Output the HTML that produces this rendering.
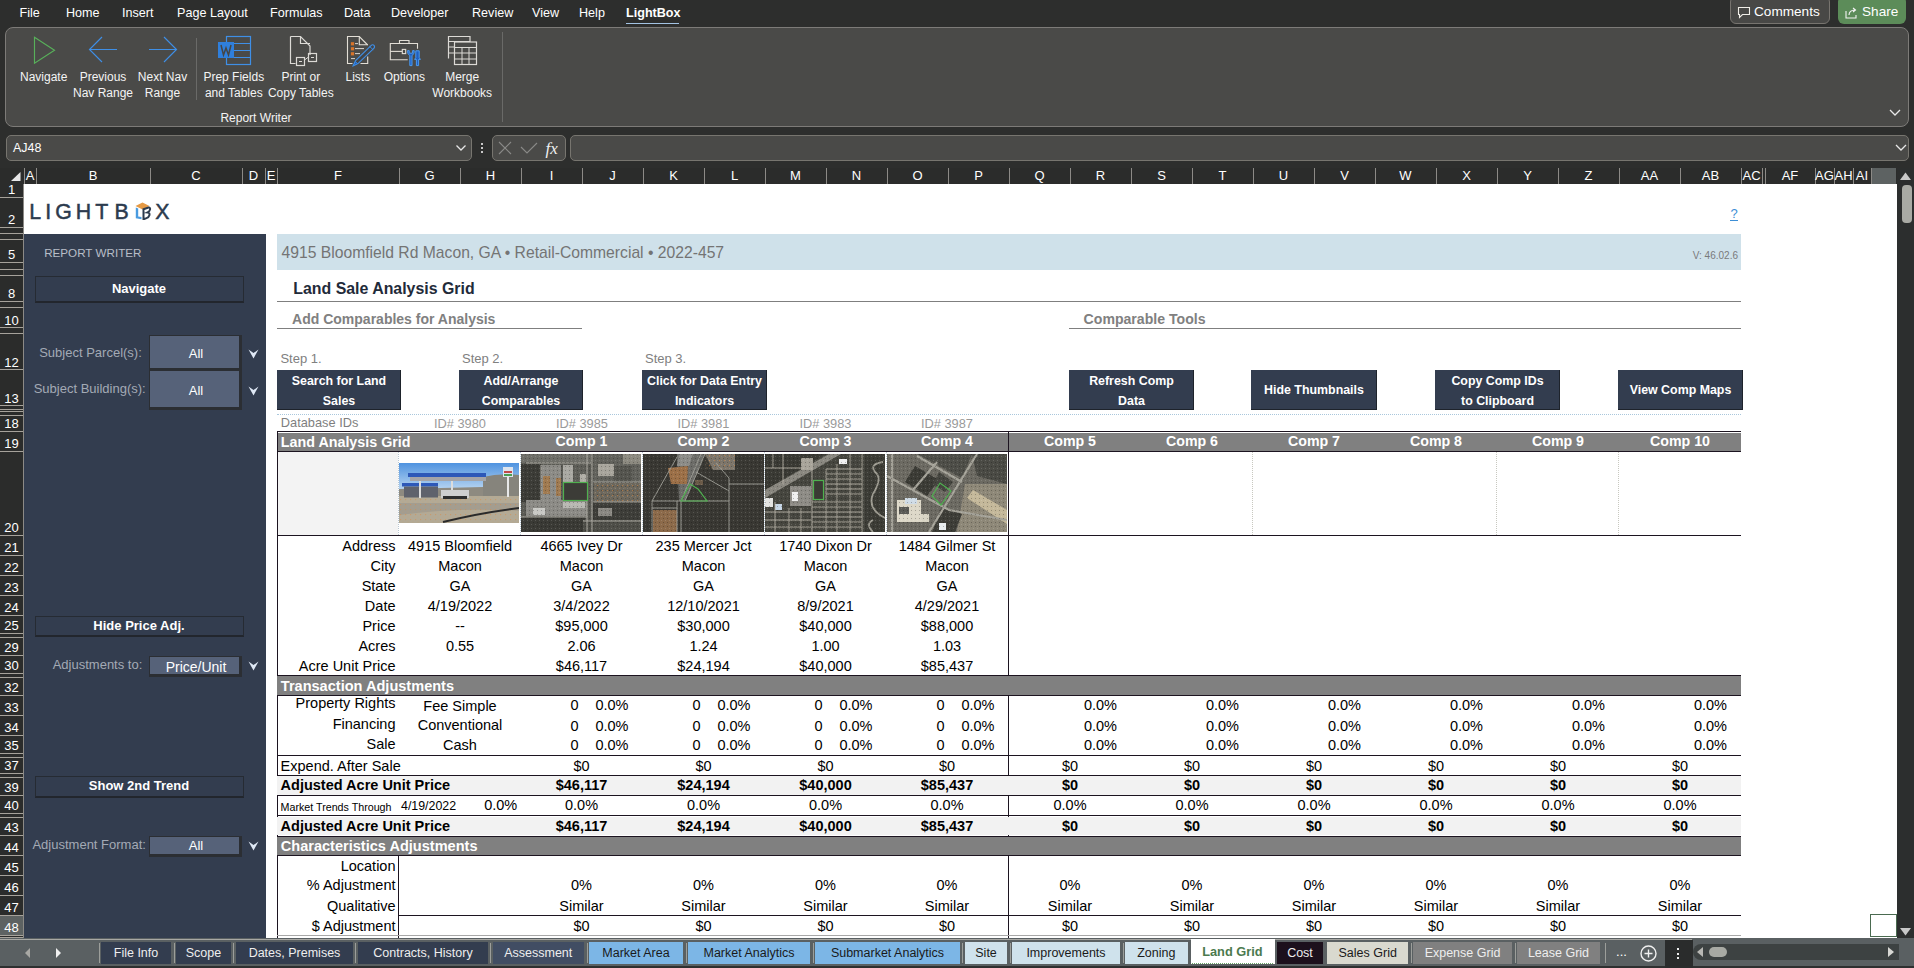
<!DOCTYPE html>
<html><head><meta charset="utf-8"><title>LightBox Land Grid</title>
<style>
html,body{margin:0;padding:0;}
body{width:1914px;height:968px;overflow:hidden;position:relative;background:#2d2e2d;font-family:'Liberation Sans', sans-serif;}
.a{position:absolute;box-sizing:border-box;}
.t{position:absolute;white-space:pre;}
</style></head><body>
<div class="t" style="left:19.5px;top:5.50px;font-size:12.6px;line-height:14.49px;color:#ffffff;font-weight:normal;">File</div>
<div class="t" style="left:66px;top:5.50px;font-size:12.6px;line-height:14.49px;color:#ffffff;font-weight:normal;">Home</div>
<div class="t" style="left:122px;top:5.50px;font-size:12.6px;line-height:14.49px;color:#ffffff;font-weight:normal;">Insert</div>
<div class="t" style="left:177px;top:5.50px;font-size:12.6px;line-height:14.49px;color:#ffffff;font-weight:normal;">Page Layout</div>
<div class="t" style="left:270px;top:5.50px;font-size:12.6px;line-height:14.49px;color:#ffffff;font-weight:normal;">Formulas</div>
<div class="t" style="left:344px;top:5.50px;font-size:12.6px;line-height:14.49px;color:#ffffff;font-weight:normal;">Data</div>
<div class="t" style="left:391px;top:5.50px;font-size:12.6px;line-height:14.49px;color:#ffffff;font-weight:normal;">Developer</div>
<div class="t" style="left:472px;top:5.50px;font-size:12.6px;line-height:14.49px;color:#ffffff;font-weight:normal;">Review</div>
<div class="t" style="left:532px;top:5.50px;font-size:12.6px;line-height:14.49px;color:#ffffff;font-weight:normal;">View</div>
<div class="t" style="left:579px;top:5.50px;font-size:12.6px;line-height:14.49px;color:#ffffff;font-weight:normal;">Help</div>
<div class="t" style="left:626px;top:5.50px;font-size:12.6px;line-height:14.49px;color:#ffffff;font-weight:bold;">LightBox</div>
<div class="a" style="left:626px;top:22.5px;width:53px;height:1.5px;background:#a3c3e3;"></div>
<div class="a" style="left:1730px;top:-4px;width:100px;height:28px;border:1px solid #77746f;border-radius:6px;background:#484846;"></div>
<svg class="a" style="left:1737px;top:6px" width="14" height="13" viewBox="0 0 14 13"><path d="M1.5 1.5h11v7h-7l-3 3v-3h-1z" fill="none" stroke="#f0eee8" stroke-width="1.1"/></svg>
<div class="t" style="left:1754px;top:4.49px;font-size:13.6px;line-height:15.64px;color:#ffffff;font-weight:normal;">Comments</div>
<div class="a" style="left:1838px;top:-4px;width:68px;height:28px;border-radius:6px;background:#5c8c59;"></div>
<svg class="a" style="left:1845px;top:6px" width="13" height="13" viewBox="0 0 13 13"><path d="M1 5v7h10V9" fill="none" stroke="#f4f4f4" stroke-width="1.1"/><path d="M4 9c0-3 2-5 6-5M8 2l2.5 2L8 6" fill="none" stroke="#f4f4f4" stroke-width="1.1"/></svg>
<div class="t" style="left:1862px;top:4.49px;font-size:13.6px;line-height:15.64px;color:#ffffff;font-weight:normal;">Share</div>
<div class="a" style="left:5px;top:27px;width:1904px;height:100px;border:1px solid #7d7b78;border-radius:8px;background:#4a4a48;"></div>
<div class="a" style="left:196px;top:38px;width:1px;height:62px;background:#6a6a68;"></div>
<div class="a" style="left:502px;top:32px;width:1px;height:90px;background:#6a6a68;"></div>
<svg class="a" style="left:1888px;top:108px" width="14" height="9" viewBox="0 0 14 9"><path d="M2 2l5 5 5-5" fill="none" stroke="#e8e8e8" stroke-width="1.3"/></svg>
<svg class="a" style="left:33px;top:36px" width="24" height="29" viewBox="0 0 24 29"><path d="M1.5 1.2L21.5 14.2L1.5 27.2Z" fill="none" stroke="#58b05a" stroke-width="1.15"/></svg>
<svg class="a" style="left:88px;top:36px" width="30" height="28" viewBox="0 0 30 28"><path d="M14 1L1.5 13.5L14 26M1.5 13.5H29" fill="none" stroke="#3f8fe6" stroke-width="1.15"/></svg>
<svg class="a" style="left:148px;top:36px" width="30" height="28" viewBox="0 0 30 28"><path d="M16 1L28.5 13.5L16 26M28.5 13.5H1" fill="none" stroke="#3f8fe6" stroke-width="1.15"/></svg>
<svg class="a" style="left:217px;top:35px" width="35" height="31" viewBox="0 0 35 31"><rect x="9.5" y="1.5" width="24" height="28" fill="none" stroke="#3f8fe6" stroke-width="1.2"/><path d="M17 8.5H33M17 15.5H33M17 22.5H33" stroke="#3f8fe6" stroke-width="1.2"/><rect x="1" y="7" width="16" height="16" fill="#2f7fdc"/><path d="M4 10l2.5 10 2.5-7 2.5 7 2.5-10" fill="none" stroke="#454545" stroke-width="1.5"/></svg>
<svg class="a" style="left:289px;top:35px" width="31" height="32" viewBox="0 0 31 32"><path d="M1.5 1.5H11.5L21 11V20M6.5 28.5H1.5V1.5" fill="none" stroke="#dcdad6" stroke-width="1.2"/><path d="M11.5 1.5V8.5H21" fill="none" stroke="#dcdad6" stroke-width="1.2"/><rect x="7.5" y="22.5" width="8" height="8" fill="none" stroke="#dcdad6" stroke-width="1.2"/><rect x="19.5" y="18.5" width="8" height="8" fill="none" stroke="#dcdad6" stroke-width="1.2"/><path d="M15.5 25L19.5 22M10 26.5h3M22 22.5h3" stroke="#dcdad6" stroke-width="1"/></svg>
<svg class="a" style="left:340px;top:32px" width="90" height="38" viewBox="0 0 90 38"><path d="M27.7 24.5V31.5H20.5M12.5 31.5H7.5V4.5H19.3L27.7 13" fill="none" stroke="#e2ded6" stroke-width="1.1"/><path d="M19.3 4.5V12.7H27.7" fill="none" stroke="#e2ded6" stroke-width="1.1"/><rect x="10.9" y="10.2" width="3.2" height="3.2" fill="#d8742a"/><rect x="10.9" y="15.2" width="3.2" height="3.2" fill="#d8742a"/><rect x="10.9" y="20.2" width="3.2" height="3.2" fill="#d8742a"/><path d="M15 11.6h3M15 16.6h9M15 21.6h5M11 26.6h4" stroke="#d8d6d0" stroke-width="1"/><path d="M13.2 33.8L15.6 28.6L31 13.6Q32.8 12 34 13.4Q35.3 14.9 33.6 16.6L18.2 31.4Z" fill="#434447" stroke="#3f8fe6" stroke-width="1.1"/><path d="M13.2 33.8L15.5 29.6L17.6 31.6Z" fill="#1f5fc0" stroke="#3f8fe6" stroke-width="0.8"/><path d="M29.5 14.3L33.2 17.8" stroke="#3f8fe6" stroke-width="0.9"/><path d="M59.5 11.3V8.5H69V11.3" fill="none" stroke="#e2ded6" stroke-width="1.1"/><path d="M77.5 16.8V11.5H50.3V27.7H67.7" fill="none" stroke="#e2ded6" stroke-width="1.1"/><path d="M50.3 19.4H62" stroke="#e2ded6" stroke-width="1.1"/><rect x="62.3" y="17.4" width="3.4" height="4.2" fill="none" stroke="#e2ded6" stroke-width="1.1"/><path d="M67.6 18.6Q67 22.2 69.8 23.4V33.6H72V23.4Q74.8 22.2 74.2 18.6L72.6 18.6V21.2H69.2V18.6Z" fill="#1f5fc0" stroke="#4a9af0" stroke-width="1"/><path d="M75.8 18.8H79.2V25.6L80.4 27.4H78.6V33.6H76.4V27.4H74.6L75.8 25.6Z" fill="#1f5fc0" stroke="#4a9af0" stroke-width="1"/></svg>
<svg class="a" style="left:447px;top:35px" width="31" height="31" viewBox="0 0 31 31"><path d="M1.5 23.5V1.5H23V7" fill="none" stroke="#dcdad6" stroke-width="1.2"/><path d="M1.5 6.5H23M1.5 12H7M1.5 18H7" stroke="#dcdad6" stroke-width="1"/><rect x="7.5" y="7" width="22" height="22.5" fill="none" stroke="#dcdad6" stroke-width="1.2"/><path d="M7.5 12.5H29.5M7.5 18H29.5M7.5 24H29.5M15 12.5V29.5M22 12.5V29.5" stroke="#dcdad6" stroke-width="1"/></svg>
<div class="t" style="left:3.700000000000003px;width:80px;text-align:center;top:71.24px;font-size:12px;line-height:13.80px;color:#f4f4f4;font-weight:normal;">Navigate</div>
<div class="t" style="left:63.0px;width:80px;text-align:center;top:71.24px;font-size:12px;line-height:13.80px;color:#f4f4f4;font-weight:normal;">Previous</div>
<div class="t" style="left:63.0px;width:80px;text-align:center;top:87.04px;font-size:12px;line-height:13.80px;color:#f4f4f4;font-weight:normal;">Nav Range</div>
<div class="t" style="left:122.5px;width:80px;text-align:center;top:71.24px;font-size:12px;line-height:13.80px;color:#f4f4f4;font-weight:normal;">Next Nav</div>
<div class="t" style="left:122.5px;width:80px;text-align:center;top:87.04px;font-size:12px;line-height:13.80px;color:#f4f4f4;font-weight:normal;">Range</div>
<div class="t" style="left:193.8px;width:80px;text-align:center;top:71.24px;font-size:12px;line-height:13.80px;color:#f4f4f4;font-weight:normal;">Prep Fields</div>
<div class="t" style="left:193.8px;width:80px;text-align:center;top:87.04px;font-size:12px;line-height:13.80px;color:#f4f4f4;font-weight:normal;">and Tables</div>
<div class="t" style="left:260.8px;width:80px;text-align:center;top:71.24px;font-size:12px;line-height:13.80px;color:#f4f4f4;font-weight:normal;">Print or</div>
<div class="t" style="left:260.8px;width:80px;text-align:center;top:87.04px;font-size:12px;line-height:13.80px;color:#f4f4f4;font-weight:normal;">Copy Tables</div>
<div class="t" style="left:327.8px;width:60px;text-align:center;top:71.24px;font-size:12px;line-height:13.80px;color:#f4f4f4;font-weight:normal;">Lists</div>
<div class="t" style="left:374.4px;width:60px;text-align:center;top:71.24px;font-size:12px;line-height:13.80px;color:#f4f4f4;font-weight:normal;">Options</div>
<div class="t" style="left:422.2px;width:80px;text-align:center;top:71.24px;font-size:12px;line-height:13.80px;color:#f4f4f4;font-weight:normal;">Merge</div>
<div class="t" style="left:422.2px;width:80px;text-align:center;top:87.04px;font-size:12px;line-height:13.80px;color:#f4f4f4;font-weight:normal;">Workbooks</div>
<div class="t" style="left:196.0px;width:120px;text-align:center;top:111.54px;font-size:12px;line-height:13.80px;color:#f4f4f4;font-weight:normal;">Report Writer</div>
<div class="a" style="left:6px;top:135px;width:466px;height:26px;border:1px solid #77756f;border-radius:5px;background:#4a4a48;"></div>
<div class="t" style="left:13px;top:141.49px;font-size:12.5px;line-height:14.37px;color:#ffffff;font-weight:normal;">AJ48</div>
<svg class="a" style="left:455px;top:144px" width="12" height="8" viewBox="0 0 12 8"><path d="M1.5 1.5l4.5 4.5 4.5-4.5" fill="none" stroke="#e6e6e6" stroke-width="1.3"/></svg>
<div class="a" style="left:481px;top:143px;width:2px;height:2px;background:#c8c8c8;"></div>
<div class="a" style="left:481px;top:147px;width:2px;height:2px;background:#c8c8c8;"></div>
<div class="a" style="left:481px;top:151px;width:2px;height:2px;background:#c8c8c8;"></div>
<div class="a" style="left:492px;top:135px;width:74px;height:26px;border:1px solid #77756f;border-radius:5px;background:#4a4a48;"></div>
<svg class="a" style="left:497px;top:141px" width="66" height="14" viewBox="0 0 66 14"><path d="M2 1l12 12M14 1L2 13" stroke="#8a8a88" stroke-width="1.1"/><path d="M24 6l6 6 10-10" fill="none" stroke="#8a8a88" stroke-width="1.1"/></svg>
<div class="t" style="left:545.5px;top:139.12px;font-size:17px;line-height:19.55px;color:#f0f0f0;font-weight:normal;font-style:italic;font-family:'Liberation Serif',serif;">fx</div>
<div class="a" style="left:570px;top:135px;width:1339px;height:26px;border:1px solid #77756f;border-radius:5px;background:#4a4a48;"></div>
<svg class="a" style="left:1894px;top:143px" width="14" height="9" viewBox="0 0 14 9"><path d="M2 2l5 5 5-5" fill="none" stroke="#e8e8e8" stroke-width="1.3"/></svg>
<div class="a" style="left:24px;top:184px;width:1873px;height:754px;background:#ffffff;"></div>
<div class="a" style="left:0px;top:168px;width:1897px;height:16px;background:#2b2c2b;"></div>
<svg class="a" style="left:11px;top:172px" width="10" height="9" viewBox="0 0 10 9"><path d="M9.5 0V9H0Z" fill="#e8e8e8"/></svg>
<div class="a" style="left:24px;top:168px;width:1px;height:16px;background:#8c8a86;"></div>
<div class="t" style="left:19.0px;width:22px;text-align:center;top:169.24px;font-size:13px;line-height:14.95px;color:#ffffff;font-weight:normal;">A</div>
<div class="a" style="left:36px;top:168px;width:1px;height:16px;background:#8c8a86;"></div>
<div class="t" style="left:31.0px;width:124px;text-align:center;top:169.24px;font-size:13px;line-height:14.95px;color:#ffffff;font-weight:normal;">B</div>
<div class="a" style="left:150px;top:168px;width:1px;height:16px;background:#8c8a86;"></div>
<div class="t" style="left:145.0px;width:102px;text-align:center;top:169.24px;font-size:13px;line-height:14.95px;color:#ffffff;font-weight:normal;">C</div>
<div class="a" style="left:242px;top:168px;width:1px;height:16px;background:#8c8a86;"></div>
<div class="t" style="left:237.0px;width:33px;text-align:center;top:169.24px;font-size:13px;line-height:14.95px;color:#ffffff;font-weight:normal;">D</div>
<div class="a" style="left:265px;top:168px;width:1px;height:16px;background:#8c8a86;"></div>
<div class="t" style="left:260.0px;width:22px;text-align:center;top:169.24px;font-size:13px;line-height:14.95px;color:#ffffff;font-weight:normal;">E</div>
<div class="a" style="left:277px;top:168px;width:1px;height:16px;background:#8c8a86;"></div>
<div class="t" style="left:272.0px;width:132px;text-align:center;top:169.24px;font-size:13px;line-height:14.95px;color:#ffffff;font-weight:normal;">F</div>
<div class="a" style="left:399px;top:168px;width:1px;height:16px;background:#8c8a86;"></div>
<div class="t" style="left:394.0px;width:71px;text-align:center;top:169.24px;font-size:13px;line-height:14.95px;color:#ffffff;font-weight:normal;">G</div>
<div class="a" style="left:460px;top:168px;width:1px;height:16px;background:#8c8a86;"></div>
<div class="t" style="left:455.0px;width:71px;text-align:center;top:169.24px;font-size:13px;line-height:14.95px;color:#ffffff;font-weight:normal;">H</div>
<div class="a" style="left:521px;top:168px;width:1px;height:16px;background:#8c8a86;"></div>
<div class="t" style="left:516.0px;width:71px;text-align:center;top:169.24px;font-size:13px;line-height:14.95px;color:#ffffff;font-weight:normal;">I</div>
<div class="a" style="left:582px;top:168px;width:1px;height:16px;background:#8c8a86;"></div>
<div class="t" style="left:577.0px;width:71px;text-align:center;top:169.24px;font-size:13px;line-height:14.95px;color:#ffffff;font-weight:normal;">J</div>
<div class="a" style="left:643px;top:168px;width:1px;height:16px;background:#8c8a86;"></div>
<div class="t" style="left:638.0px;width:71px;text-align:center;top:169.24px;font-size:13px;line-height:14.95px;color:#ffffff;font-weight:normal;">K</div>
<div class="a" style="left:704px;top:168px;width:1px;height:16px;background:#8c8a86;"></div>
<div class="t" style="left:699.0px;width:71px;text-align:center;top:169.24px;font-size:13px;line-height:14.95px;color:#ffffff;font-weight:normal;">L</div>
<div class="a" style="left:765px;top:168px;width:1px;height:16px;background:#8c8a86;"></div>
<div class="t" style="left:760.0px;width:71px;text-align:center;top:169.24px;font-size:13px;line-height:14.95px;color:#ffffff;font-weight:normal;">M</div>
<div class="a" style="left:826px;top:168px;width:1px;height:16px;background:#8c8a86;"></div>
<div class="t" style="left:821.0px;width:71px;text-align:center;top:169.24px;font-size:13px;line-height:14.95px;color:#ffffff;font-weight:normal;">N</div>
<div class="a" style="left:887px;top:168px;width:1px;height:16px;background:#8c8a86;"></div>
<div class="t" style="left:882.0px;width:71px;text-align:center;top:169.24px;font-size:13px;line-height:14.95px;color:#ffffff;font-weight:normal;">O</div>
<div class="a" style="left:948px;top:168px;width:1px;height:16px;background:#8c8a86;"></div>
<div class="t" style="left:943.0px;width:71px;text-align:center;top:169.24px;font-size:13px;line-height:14.95px;color:#ffffff;font-weight:normal;">P</div>
<div class="a" style="left:1009px;top:168px;width:1px;height:16px;background:#8c8a86;"></div>
<div class="t" style="left:1004.0px;width:71px;text-align:center;top:169.24px;font-size:13px;line-height:14.95px;color:#ffffff;font-weight:normal;">Q</div>
<div class="a" style="left:1070px;top:168px;width:1px;height:16px;background:#8c8a86;"></div>
<div class="t" style="left:1065.0px;width:71px;text-align:center;top:169.24px;font-size:13px;line-height:14.95px;color:#ffffff;font-weight:normal;">R</div>
<div class="a" style="left:1131px;top:168px;width:1px;height:16px;background:#8c8a86;"></div>
<div class="t" style="left:1126.0px;width:71px;text-align:center;top:169.24px;font-size:13px;line-height:14.95px;color:#ffffff;font-weight:normal;">S</div>
<div class="a" style="left:1192px;top:168px;width:1px;height:16px;background:#8c8a86;"></div>
<div class="t" style="left:1187.0px;width:71px;text-align:center;top:169.24px;font-size:13px;line-height:14.95px;color:#ffffff;font-weight:normal;">T</div>
<div class="a" style="left:1253px;top:168px;width:1px;height:16px;background:#8c8a86;"></div>
<div class="t" style="left:1248.0px;width:71px;text-align:center;top:169.24px;font-size:13px;line-height:14.95px;color:#ffffff;font-weight:normal;">U</div>
<div class="a" style="left:1314px;top:168px;width:1px;height:16px;background:#8c8a86;"></div>
<div class="t" style="left:1309.0px;width:71px;text-align:center;top:169.24px;font-size:13px;line-height:14.95px;color:#ffffff;font-weight:normal;">V</div>
<div class="a" style="left:1375px;top:168px;width:1px;height:16px;background:#8c8a86;"></div>
<div class="t" style="left:1370.0px;width:71px;text-align:center;top:169.24px;font-size:13px;line-height:14.95px;color:#ffffff;font-weight:normal;">W</div>
<div class="a" style="left:1436px;top:168px;width:1px;height:16px;background:#8c8a86;"></div>
<div class="t" style="left:1431.0px;width:71px;text-align:center;top:169.24px;font-size:13px;line-height:14.95px;color:#ffffff;font-weight:normal;">X</div>
<div class="a" style="left:1497px;top:168px;width:1px;height:16px;background:#8c8a86;"></div>
<div class="t" style="left:1492.0px;width:71px;text-align:center;top:169.24px;font-size:13px;line-height:14.95px;color:#ffffff;font-weight:normal;">Y</div>
<div class="a" style="left:1558px;top:168px;width:1px;height:16px;background:#8c8a86;"></div>
<div class="t" style="left:1553.0px;width:71px;text-align:center;top:169.24px;font-size:13px;line-height:14.95px;color:#ffffff;font-weight:normal;">Z</div>
<div class="a" style="left:1619px;top:168px;width:1px;height:16px;background:#8c8a86;"></div>
<div class="t" style="left:1614.0px;width:71px;text-align:center;top:169.24px;font-size:13px;line-height:14.95px;color:#ffffff;font-weight:normal;">AA</div>
<div class="a" style="left:1680px;top:168px;width:1px;height:16px;background:#8c8a86;"></div>
<div class="t" style="left:1675.0px;width:71px;text-align:center;top:169.24px;font-size:13px;line-height:14.95px;color:#ffffff;font-weight:normal;">AB</div>
<div class="a" style="left:1741px;top:168px;width:1px;height:16px;background:#8c8a86;"></div>
<div class="t" style="left:1736.0px;width:31px;text-align:center;top:169.24px;font-size:13px;line-height:14.95px;color:#ffffff;font-weight:normal;">AC</div>
<div class="a" style="left:1762px;top:168px;width:1px;height:16px;background:#8c8a86;"></div>
<div class="a" style="left:1765px;top:168px;width:1px;height:16px;background:#8c8a86;"></div>
<div class="t" style="left:1760.0px;width:60px;text-align:center;top:169.24px;font-size:13px;line-height:14.95px;color:#ffffff;font-weight:normal;">AF</div>
<div class="a" style="left:1815px;top:168px;width:1px;height:16px;background:#8c8a86;"></div>
<div class="t" style="left:1810.0px;width:29px;text-align:center;top:169.24px;font-size:13px;line-height:14.95px;color:#ffffff;font-weight:normal;">AG</div>
<div class="a" style="left:1834px;top:168px;width:1px;height:16px;background:#8c8a86;"></div>
<div class="t" style="left:1829.0px;width:29px;text-align:center;top:169.24px;font-size:13px;line-height:14.95px;color:#ffffff;font-weight:normal;">AH</div>
<div class="a" style="left:1853px;top:168px;width:1px;height:16px;background:#8c8a86;"></div>
<div class="t" style="left:1848.0px;width:28px;text-align:center;top:169.24px;font-size:13px;line-height:14.95px;color:#ffffff;font-weight:normal;">AI</div>
<div class="a" style="left:1871px;top:168px;width:1px;height:16px;background:#8c8a86;"></div>
<div class="a" style="left:1872px;top:168px;width:24px;height:16px;background:#5d6262;"></div>
<div class="a" style="left:0px;top:184px;width:23px;height:754px;background:#2b2c2b;"></div>
<div class="a" style="left:0px;top:915.5px;width:23px;height:20px;background:#5d6262;"></div>
<div class="a" style="left:23px;top:184px;width:1px;height:754px;background:#8c8a86;"></div>
<div class="a" style="left:0px;top:197px;width:23px;height:1px;background:#a6a29b;"></div>
<div class="t" style="left:-0.5px;width:24px;text-align:center;top:182.54px;font-size:13px;line-height:14.95px;color:#ffffff;font-weight:normal;">1</div>
<div class="a" style="left:0px;top:227px;width:23px;height:1px;background:#a6a29b;"></div>
<div class="t" style="left:-0.5px;width:24px;text-align:center;top:213.04px;font-size:13px;line-height:14.95px;color:#ffffff;font-weight:normal;">2</div>
<div class="a" style="left:0px;top:233px;width:23px;height:1px;background:#a6a29b;"></div>
<div class="a" style="left:0px;top:239px;width:23px;height:1px;background:#a6a29b;"></div>
<div class="a" style="left:0px;top:262px;width:23px;height:1px;background:#a6a29b;"></div>
<div class="t" style="left:-0.5px;width:24px;text-align:center;top:248.04px;font-size:13px;line-height:14.95px;color:#ffffff;font-weight:normal;">5</div>
<div class="a" style="left:0px;top:269px;width:23px;height:1px;background:#a6a29b;"></div>
<div class="a" style="left:0px;top:275px;width:23px;height:1px;background:#a6a29b;"></div>
<div class="a" style="left:0px;top:301px;width:23px;height:1px;background:#a6a29b;"></div>
<div class="t" style="left:-0.5px;width:24px;text-align:center;top:286.54px;font-size:13px;line-height:14.95px;color:#ffffff;font-weight:normal;">8</div>
<div class="a" style="left:0px;top:307px;width:23px;height:1px;background:#a6a29b;"></div>
<div class="a" style="left:0px;top:327px;width:23px;height:1px;background:#a6a29b;"></div>
<div class="t" style="left:-0.5px;width:24px;text-align:center;top:313.54px;font-size:13px;line-height:14.95px;color:#ffffff;font-weight:normal;">10</div>
<div class="a" style="left:0px;top:333px;width:23px;height:1px;background:#a6a29b;"></div>
<div class="a" style="left:0px;top:369px;width:23px;height:1px;background:#a6a29b;"></div>
<div class="t" style="left:-0.5px;width:24px;text-align:center;top:355.54px;font-size:13px;line-height:14.95px;color:#ffffff;font-weight:normal;">12</div>
<div class="a" style="left:0px;top:405px;width:23px;height:1px;background:#a6a29b;"></div>
<div class="t" style="left:-0.5px;width:24px;text-align:center;top:391.54px;font-size:13px;line-height:14.95px;color:#ffffff;font-weight:normal;">13</div>
<div class="a" style="left:0px;top:409px;width:23px;height:1px;background:#a6a29b;"></div>
<div class="a" style="left:0px;top:411px;width:23px;height:1px;background:#a6a29b;"></div>
<div class="a" style="left:0px;top:415px;width:23px;height:1px;background:#a6a29b;"></div>
<div class="a" style="left:0px;top:431px;width:23px;height:1px;background:#a6a29b;"></div>
<div class="t" style="left:-0.5px;width:24px;text-align:center;top:416.54px;font-size:13px;line-height:14.95px;color:#ffffff;font-weight:normal;">18</div>
<div class="a" style="left:0px;top:451px;width:23px;height:1px;background:#a6a29b;"></div>
<div class="t" style="left:-0.5px;width:24px;text-align:center;top:436.54px;font-size:13px;line-height:14.95px;color:#ffffff;font-weight:normal;">19</div>
<div class="a" style="left:0px;top:535px;width:23px;height:1px;background:#a6a29b;"></div>
<div class="t" style="left:-0.5px;width:24px;text-align:center;top:520.53px;font-size:13px;line-height:14.95px;color:#ffffff;font-weight:normal;">20</div>
<div class="a" style="left:0px;top:555px;width:23px;height:1px;background:#a6a29b;"></div>
<div class="t" style="left:-0.5px;width:24px;text-align:center;top:540.53px;font-size:13px;line-height:14.95px;color:#ffffff;font-weight:normal;">21</div>
<div class="a" style="left:0px;top:575px;width:23px;height:1px;background:#a6a29b;"></div>
<div class="t" style="left:-0.5px;width:24px;text-align:center;top:560.53px;font-size:13px;line-height:14.95px;color:#ffffff;font-weight:normal;">22</div>
<div class="a" style="left:0px;top:595px;width:23px;height:1px;background:#a6a29b;"></div>
<div class="t" style="left:-0.5px;width:24px;text-align:center;top:580.53px;font-size:13px;line-height:14.95px;color:#ffffff;font-weight:normal;">23</div>
<div class="a" style="left:0px;top:615px;width:23px;height:1px;background:#a6a29b;"></div>
<div class="t" style="left:-0.5px;width:24px;text-align:center;top:600.53px;font-size:13px;line-height:14.95px;color:#ffffff;font-weight:normal;">24</div>
<div class="a" style="left:0px;top:633px;width:23px;height:1px;background:#a6a29b;"></div>
<div class="t" style="left:-0.5px;width:24px;text-align:center;top:618.53px;font-size:13px;line-height:14.95px;color:#ffffff;font-weight:normal;">25</div>
<div class="a" style="left:0px;top:637px;width:23px;height:1px;background:#a6a29b;"></div>
<div class="a" style="left:0px;top:655px;width:23px;height:1px;background:#a6a29b;"></div>
<div class="t" style="left:-0.5px;width:24px;text-align:center;top:640.53px;font-size:13px;line-height:14.95px;color:#ffffff;font-weight:normal;">29</div>
<div class="a" style="left:0px;top:673px;width:23px;height:1px;background:#a6a29b;"></div>
<div class="t" style="left:-0.5px;width:24px;text-align:center;top:658.53px;font-size:13px;line-height:14.95px;color:#ffffff;font-weight:normal;">30</div>
<div class="a" style="left:0px;top:677px;width:23px;height:1px;background:#a6a29b;"></div>
<div class="a" style="left:0px;top:695px;width:23px;height:1px;background:#a6a29b;"></div>
<div class="t" style="left:-0.5px;width:24px;text-align:center;top:680.53px;font-size:13px;line-height:14.95px;color:#ffffff;font-weight:normal;">32</div>
<div class="a" style="left:0px;top:715px;width:23px;height:1px;background:#a6a29b;"></div>
<div class="t" style="left:-0.5px;width:24px;text-align:center;top:700.53px;font-size:13px;line-height:14.95px;color:#ffffff;font-weight:normal;">33</div>
<div class="a" style="left:0px;top:735px;width:23px;height:1px;background:#a6a29b;"></div>
<div class="t" style="left:-0.5px;width:24px;text-align:center;top:720.53px;font-size:13px;line-height:14.95px;color:#ffffff;font-weight:normal;">34</div>
<div class="a" style="left:0px;top:753px;width:23px;height:1px;background:#a6a29b;"></div>
<div class="t" style="left:-0.5px;width:24px;text-align:center;top:738.53px;font-size:13px;line-height:14.95px;color:#ffffff;font-weight:normal;">35</div>
<div class="a" style="left:0px;top:757px;width:23px;height:1px;background:#a6a29b;"></div>
<div class="a" style="left:0px;top:773px;width:23px;height:1px;background:#a6a29b;"></div>
<div class="t" style="left:-0.5px;width:24px;text-align:center;top:758.53px;font-size:13px;line-height:14.95px;color:#ffffff;font-weight:normal;">37</div>
<div class="a" style="left:0px;top:777px;width:23px;height:1px;background:#a6a29b;"></div>
<div class="a" style="left:0px;top:795px;width:23px;height:1px;background:#a6a29b;"></div>
<div class="t" style="left:-0.5px;width:24px;text-align:center;top:780.53px;font-size:13px;line-height:14.95px;color:#ffffff;font-weight:normal;">39</div>
<div class="a" style="left:0px;top:813px;width:23px;height:1px;background:#a6a29b;"></div>
<div class="t" style="left:-0.5px;width:24px;text-align:center;top:798.53px;font-size:13px;line-height:14.95px;color:#ffffff;font-weight:normal;">40</div>
<div class="a" style="left:0px;top:817px;width:23px;height:1px;background:#a6a29b;"></div>
<div class="a" style="left:0px;top:835px;width:23px;height:1px;background:#a6a29b;"></div>
<div class="t" style="left:-0.5px;width:24px;text-align:center;top:820.53px;font-size:13px;line-height:14.95px;color:#ffffff;font-weight:normal;">43</div>
<div class="a" style="left:0px;top:855px;width:23px;height:1px;background:#a6a29b;"></div>
<div class="t" style="left:-0.5px;width:24px;text-align:center;top:840.53px;font-size:13px;line-height:14.95px;color:#ffffff;font-weight:normal;">44</div>
<div class="a" style="left:0px;top:875px;width:23px;height:1px;background:#a6a29b;"></div>
<div class="t" style="left:-0.5px;width:24px;text-align:center;top:860.53px;font-size:13px;line-height:14.95px;color:#ffffff;font-weight:normal;">45</div>
<div class="a" style="left:0px;top:895px;width:23px;height:1px;background:#a6a29b;"></div>
<div class="t" style="left:-0.5px;width:24px;text-align:center;top:880.53px;font-size:13px;line-height:14.95px;color:#ffffff;font-weight:normal;">46</div>
<div class="a" style="left:0px;top:915px;width:23px;height:1px;background:#a6a29b;"></div>
<div class="t" style="left:-0.5px;width:24px;text-align:center;top:900.53px;font-size:13px;line-height:14.95px;color:#ffffff;font-weight:normal;">47</div>
<div class="a" style="left:0px;top:935px;width:23px;height:1px;background:#a6a29b;"></div>
<div class="t" style="left:-0.5px;width:24px;text-align:center;top:920.53px;font-size:13px;line-height:14.95px;color:#ffffff;font-weight:normal;">48</div>
<div class="a" style="left:0px;top:937px;width:23px;height:1px;background:#a6a29b;"></div>
<div class="t" style="left:29.2px;top:199.72px;font-size:21.3px;line-height:24.49px;color:#2c3b4e;font-weight:normal;-webkit-text-stroke:0.5px #2c3b4e;">L</div>
<div class="t" style="left:45.2px;top:199.72px;font-size:21.3px;line-height:24.49px;color:#2c3b4e;font-weight:normal;-webkit-text-stroke:0.5px #2c3b4e;">I</div>
<div class="t" style="left:55.2px;top:199.72px;font-size:21.3px;line-height:24.49px;color:#2c3b4e;font-weight:normal;-webkit-text-stroke:0.5px #2c3b4e;">G</div>
<div class="t" style="left:75.8px;top:199.72px;font-size:21.3px;line-height:24.49px;color:#2c3b4e;font-weight:normal;-webkit-text-stroke:0.5px #2c3b4e;">H</div>
<div class="t" style="left:95.2px;top:199.72px;font-size:21.3px;line-height:24.49px;color:#2c3b4e;font-weight:normal;-webkit-text-stroke:0.5px #2c3b4e;">T</div>
<div class="t" style="left:114.5px;top:199.72px;font-size:21.3px;line-height:24.49px;color:#2c3b4e;font-weight:normal;-webkit-text-stroke:0.5px #2c3b4e;">B</div>
<div class="t" style="left:155.3px;top:199.72px;font-size:21.3px;line-height:24.49px;color:#2c3b4e;font-weight:normal;-webkit-text-stroke:0.5px #2c3b4e;">X</div>
<svg class="a" style="left:135px;top:201px" width="17" height="19" viewBox="0 0 17 19"><path d="M0.5 5L7.5 1.5L14.5 5L7.5 8.5Z" fill="#e59a45"/><path d="M0.8 6.5V17.2L6.5 18.2V16L3.2 15.4V7.6Z" fill="#4a9be0"/><path d="M8.5 8.3L13.5 6.6Q15.5 6.4 15 8.6Q14.6 10.4 12.6 11.4Q15 11.6 14.4 14.2Q13.9 16.4 11 17.4L8.5 18.3Z" fill="none" stroke="#2c3b4e" stroke-width="2"/></svg>
<div class="t" style="left:1724.0px;width:20px;text-align:center;top:206.74px;font-size:13px;line-height:14.95px;color:#3d8fd6;font-weight:normal;">?</div>
<div class="a" style="left:1730px;top:220px;width:8px;height:1px;background:#3d8fd6;"></div>
<div class="a" style="left:24px;top:234px;width:242px;height:704px;background:#333d4f;"></div>
<div class="t" style="left:44.2px;top:245.66px;font-size:11.65px;line-height:13.40px;color:#b8bec8;font-weight:normal;">REPORT WRITER</div>
<div class="a" style="left:35px;top:275.5px;width:209px;height:27.0px;border:1px solid #262b33;border-bottom:2px solid #22262d;background:#333d4f;"></div>
<div class="t" style="left:39.0px;width:200px;text-align:center;top:281.54px;font-size:13px;line-height:14.95px;color:#ffffff;font-weight:bold;">Navigate</div>
<div class="a" style="left:35px;top:615.5px;width:209px;height:21.5px;border:1px solid #262b33;border-bottom:2px solid #22262d;background:#333d4f;"></div>
<div class="t" style="left:39.0px;width:200px;text-align:center;top:619.03px;font-size:13px;line-height:14.95px;color:#ffffff;font-weight:bold;">Hide Price Adj.</div>
<div class="a" style="left:35px;top:775.5px;width:209px;height:22.0px;border:1px solid #262b33;border-bottom:2px solid #22262d;background:#333d4f;"></div>
<div class="t" style="left:39.0px;width:200px;text-align:center;top:779.24px;font-size:13px;line-height:14.95px;color:#ffffff;font-weight:bold;">Show 2nd Trend</div>
<div class="t" style="left:11.800000000000011px;width:130px;text-align:right;top:345.54px;font-size:13px;line-height:14.95px;color:#a3aab5;font-weight:normal;">Subject Parcel(s):</div>
<div class="a" style="left:149px;top:334.5px;width:93px;height:36.0px;border:1px solid #2b2e33;border-right:3px solid #2b2e33;border-bottom:3px solid #2b2e33;background:#566279;"></div>
<div class="t" style="left:146.0px;width:100px;text-align:center;top:346.74px;font-size:13px;line-height:14.95px;color:#ffffff;font-weight:normal;">All</div>
<svg class="a" style="left:248px;top:348.5px" width="11" height="10" viewBox="0 0 11 10"><path d="M0.5 0.5L5.5 9.5L10.5 0.5L5.5 4Z" fill="#dfe8f5"/></svg>
<div class="t" style="left:15.699999999999989px;width:130px;text-align:right;top:382.44px;font-size:13px;line-height:14.95px;color:#a3aab5;font-weight:normal;">Subject Building(s):</div>
<div class="a" style="left:149px;top:369.5px;width:93px;height:40.5px;border:1px solid #2b2e33;border-right:3px solid #2b2e33;border-bottom:3px solid #2b2e33;background:#566279;"></div>
<div class="t" style="left:146.0px;width:100px;text-align:center;top:383.74px;font-size:13px;line-height:14.95px;color:#ffffff;font-weight:normal;">All</div>
<svg class="a" style="left:248px;top:385.5px" width="11" height="10" viewBox="0 0 11 10"><path d="M0.5 0.5L5.5 9.5L10.5 0.5L5.5 4Z" fill="#dfe8f5"/></svg>
<div class="t" style="left:12.300000000000011px;width:130px;text-align:right;top:658.13px;font-size:13px;line-height:14.95px;color:#a3aab5;font-weight:normal;">Adjustments to:</div>
<div class="a" style="left:149px;top:655.5px;width:93px;height:21.5px;border:1px solid #2b2e33;border-right:3px solid #2b2e33;border-bottom:3px solid #2b2e33;background:#566279;"></div>
<div class="t" style="left:146.0px;width:100px;text-align:center;top:658.63px;font-size:14px;line-height:16.10px;color:#ffffff;font-weight:normal;">Price/Unit</div>
<svg class="a" style="left:248px;top:661.3px" width="11" height="10" viewBox="0 0 11 10"><path d="M0.5 0.5L5.5 9.5L10.5 0.5L5.5 4Z" fill="#dfe8f5"/></svg>
<div class="t" style="left:15.900000000000006px;width:130px;text-align:right;top:838.44px;font-size:13px;line-height:14.95px;color:#a3aab5;font-weight:normal;">Adjustment Format:</div>
<div class="a" style="left:149px;top:835.5px;width:93px;height:21.0px;border:1px solid #2b2e33;border-right:3px solid #2b2e33;border-bottom:3px solid #2b2e33;background:#566279;"></div>
<div class="t" style="left:146.0px;width:100px;text-align:center;top:839.24px;font-size:13px;line-height:14.95px;color:#ffffff;font-weight:normal;">All</div>
<svg class="a" style="left:248px;top:841px" width="11" height="10" viewBox="0 0 11 10"><path d="M0.5 0.5L5.5 9.5L10.5 0.5L5.5 4Z" fill="#dfe8f5"/></svg>
<div class="a" style="left:277px;top:234px;width:1464px;height:36px;background:#cfe1ea;"></div>
<div class="t" style="left:281.5px;top:244.19px;font-size:15.7px;line-height:18.05px;color:#747474;font-weight:normal;">4915 Bloomfield Rd Macon, GA • Retail-Commercial • 2022-457</div>
<div class="t" style="left:1658px;width:80px;text-align:right;top:249.95px;font-size:10px;line-height:11.50px;color:#7a7a7a;font-weight:normal;">V: 46.02.6</div>
<div class="t" style="left:293.3px;top:280.41px;font-size:15.9px;line-height:18.29px;color:#1f2b3a;font-weight:bold;">Land Sale Analysis Grid</div>
<div class="a" style="left:277px;top:301px;width:1464px;height:1px;background:#7f7f7f;"></div>
<div class="t" style="left:292.1px;top:311.33px;font-size:14px;line-height:16.10px;color:#808080;font-weight:bold;">Add Comparables for Analysis</div>
<div class="a" style="left:277px;top:327.5px;width:305px;height:1px;background:#7f7f7f;"></div>
<div class="t" style="left:1083.6px;top:311.24px;font-size:14.1px;line-height:16.21px;color:#808080;font-weight:bold;">Comparable Tools</div>
<div class="a" style="left:1069px;top:327.5px;width:672px;height:1px;background:#7f7f7f;"></div>
<div class="t" style="left:280.4px;top:351.74px;font-size:13px;line-height:14.95px;color:#808080;font-weight:normal;">Step 1.</div>
<div class="t" style="left:462px;top:351.74px;font-size:13px;line-height:14.95px;color:#808080;font-weight:normal;">Step 2.</div>
<div class="t" style="left:645px;top:351.74px;font-size:13px;line-height:14.95px;color:#808080;font-weight:normal;">Step 3.</div>
<div class="a" style="left:277px;top:370px;width:124px;height:40px;border-right:1px solid #1e232b;border-bottom:1px solid #1e232b;background:#333d4f;"></div>
<div class="t" style="left:259.0px;width:160px;text-align:center;top:373.68px;font-size:12.4px;line-height:14.26px;color:#ffffff;font-weight:bold;">Search for Land</div>
<div class="t" style="left:259.0px;width:160px;text-align:center;top:393.58px;font-size:12.4px;line-height:14.26px;color:#ffffff;font-weight:bold;">Sales</div>
<div class="a" style="left:459px;top:370px;width:124px;height:40px;border-right:1px solid #1e232b;border-bottom:1px solid #1e232b;background:#333d4f;"></div>
<div class="t" style="left:441.0px;width:160px;text-align:center;top:373.68px;font-size:12.4px;line-height:14.26px;color:#ffffff;font-weight:bold;">Add/Arrange</div>
<div class="t" style="left:441.0px;width:160px;text-align:center;top:393.58px;font-size:12.4px;line-height:14.26px;color:#ffffff;font-weight:bold;">Comparables</div>
<div class="a" style="left:642px;top:370px;width:125px;height:40px;border-right:1px solid #1e232b;border-bottom:1px solid #1e232b;background:#333d4f;"></div>
<div class="t" style="left:624.5px;width:160px;text-align:center;top:373.68px;font-size:12.4px;line-height:14.26px;color:#ffffff;font-weight:bold;">Click for Data Entry</div>
<div class="t" style="left:624.5px;width:160px;text-align:center;top:393.58px;font-size:12.4px;line-height:14.26px;color:#ffffff;font-weight:bold;">Indicators</div>
<div class="a" style="left:1069px;top:370px;width:125px;height:40px;border-right:1px solid #1e232b;border-bottom:1px solid #1e232b;background:#333d4f;"></div>
<div class="t" style="left:1051.5px;width:160px;text-align:center;top:373.68px;font-size:12.4px;line-height:14.26px;color:#ffffff;font-weight:bold;">Refresh Comp</div>
<div class="t" style="left:1051.5px;width:160px;text-align:center;top:393.58px;font-size:12.4px;line-height:14.26px;color:#ffffff;font-weight:bold;">Data</div>
<div class="a" style="left:1251px;top:370px;width:126px;height:40px;border-right:1px solid #1e232b;border-bottom:1px solid #1e232b;background:#333d4f;"></div>
<div class="t" style="left:1234.0px;width:160px;text-align:center;top:383.28px;font-size:12.4px;line-height:14.26px;color:#ffffff;font-weight:bold;">Hide Thumbnails</div>
<div class="a" style="left:1435px;top:370px;width:125px;height:40px;border-right:1px solid #1e232b;border-bottom:1px solid #1e232b;background:#333d4f;"></div>
<div class="t" style="left:1417.5px;width:160px;text-align:center;top:373.68px;font-size:12.4px;line-height:14.26px;color:#ffffff;font-weight:bold;">Copy Comp IDs</div>
<div class="t" style="left:1417.5px;width:160px;text-align:center;top:393.58px;font-size:12.4px;line-height:14.26px;color:#ffffff;font-weight:bold;">to Clipboard</div>
<div class="a" style="left:1618px;top:370px;width:125px;height:40px;border-right:1px solid #1e232b;border-bottom:1px solid #1e232b;background:#333d4f;"></div>
<div class="t" style="left:1600.5px;width:160px;text-align:center;top:383.28px;font-size:12.4px;line-height:14.26px;color:#ffffff;font-weight:bold;">View Comp Maps</div>
<div class="a" style="left:277px;top:414px;width:1464px;height:0;border-top:1px dotted #a9c7dc;"></div>
<div class="t" style="left:280.8px;top:416.22px;font-size:12.8px;line-height:14.72px;color:#7f7f7f;font-weight:normal;">Database IDs</div>
<div class="t" style="left:410.0px;width:100px;text-align:center;top:416.62px;font-size:12.8px;line-height:14.72px;color:#9a9a9a;font-weight:normal;">ID# 3980</div>
<div class="t" style="left:532.0px;width:100px;text-align:center;top:416.62px;font-size:12.8px;line-height:14.72px;color:#9a9a9a;font-weight:normal;">ID# 3985</div>
<div class="t" style="left:653.5px;width:100px;text-align:center;top:416.62px;font-size:12.8px;line-height:14.72px;color:#9a9a9a;font-weight:normal;">ID# 3981</div>
<div class="t" style="left:775.5px;width:100px;text-align:center;top:416.62px;font-size:12.8px;line-height:14.72px;color:#9a9a9a;font-weight:normal;">ID# 3983</div>
<div class="t" style="left:897.0px;width:100px;text-align:center;top:416.62px;font-size:12.8px;line-height:14.72px;color:#9a9a9a;font-weight:normal;">ID# 3987</div>
<div class="a" style="left:277px;top:432.5px;width:1464px;height:18.30000000000001px;background:#808080;"></div>
<div class="a" style="left:277px;top:431px;width:1464px;height:1px;background:#1c1420;"></div>
<div class="a" style="left:277px;top:451px;width:1464px;height:1px;background:#1c1420;"></div>
<div class="t" style="left:280.8px;top:434.46px;font-size:14.3px;line-height:16.45px;color:#ffffff;font-weight:bold;">Land Analysis Grid</div>
<div class="t" style="left:531.5px;width:100px;text-align:center;top:433.35px;font-size:14.2px;line-height:16.33px;color:#ffffff;font-weight:bold;">Comp 1</div>
<div class="t" style="left:653.5px;width:100px;text-align:center;top:433.35px;font-size:14.2px;line-height:16.33px;color:#ffffff;font-weight:bold;">Comp 2</div>
<div class="t" style="left:775.5px;width:100px;text-align:center;top:433.35px;font-size:14.2px;line-height:16.33px;color:#ffffff;font-weight:bold;">Comp 3</div>
<div class="t" style="left:897.0px;width:100px;text-align:center;top:433.35px;font-size:14.2px;line-height:16.33px;color:#ffffff;font-weight:bold;">Comp 4</div>
<div class="t" style="left:1020.0px;width:100px;text-align:center;top:433.35px;font-size:14.2px;line-height:16.33px;color:#ffffff;font-weight:bold;">Comp 5</div>
<div class="t" style="left:1142.0px;width:100px;text-align:center;top:433.35px;font-size:14.2px;line-height:16.33px;color:#ffffff;font-weight:bold;">Comp 6</div>
<div class="t" style="left:1264.0px;width:100px;text-align:center;top:433.35px;font-size:14.2px;line-height:16.33px;color:#ffffff;font-weight:bold;">Comp 7</div>
<div class="t" style="left:1386.0px;width:100px;text-align:center;top:433.35px;font-size:14.2px;line-height:16.33px;color:#ffffff;font-weight:bold;">Comp 8</div>
<div class="t" style="left:1508.0px;width:100px;text-align:center;top:433.35px;font-size:14.2px;line-height:16.33px;color:#ffffff;font-weight:bold;">Comp 9</div>
<div class="t" style="left:1630.0px;width:100px;text-align:center;top:433.35px;font-size:14.2px;line-height:16.33px;color:#ffffff;font-weight:bold;">Comp 10</div>
<div class="a" style="left:278px;top:452px;width:120px;height:83px;background:#f3f3f3;"></div>
<div class="a" style="left:398px;top:452px;width:0;height:82.5px;border-left:1px dotted #b9c7d2;"></div>
<div class="a" style="left:520px;top:452px;width:0;height:82.5px;border-left:1px dotted #b9c7d2;"></div>
<div class="a" style="left:642px;top:452px;width:0;height:82.5px;border-left:1px dotted #b9c7d2;"></div>
<div class="a" style="left:764px;top:452px;width:0;height:82.5px;border-left:1px dotted #b9c7d2;"></div>
<div class="a" style="left:886px;top:452px;width:0;height:82.5px;border-left:1px dotted #b9c7d2;"></div>
<div class="a" style="left:1252px;top:452px;width:0;height:82.5px;border-left:1px dotted #c8c8c0;"></div>
<div class="a" style="left:1496px;top:452px;width:0;height:82.5px;border-left:1px dotted #c8c8c0;"></div>
<div class="a" style="left:1618px;top:452px;width:0;height:82.5px;border-left:1px dotted #c8c8c0;"></div>
<div class="a" style="left:277px;top:535px;width:1464px;height:1px;background:#1c1420;"></div>
<svg class="a" style="left:399px;top:463px" width="120" height="60" viewBox="0 0 120 60"><defs><linearGradient id="sky" x1="0" y1="0" x2="0" y2="1"><stop offset="0" stop-color="#4f93e0"/><stop offset="1" stop-color="#b5d3f0"/></linearGradient></defs><defs><pattern id="spk" width="4" height="4" patternUnits="userSpaceOnUse"><rect x="0" y="0" width="1" height="1" fill="#000" fill-opacity="0.25"/><rect x="2" y="2" width="1" height="1" fill="#fff" fill-opacity="0.15"/></pattern><pattern id="org" width="5" height="5" patternUnits="userSpaceOnUse"><rect x="1" y="1" width="1.2" height="1.2" fill="#e0893a"/><rect x="3.5" y="3.5" width="1" height="1" fill="#c8a070"/></pattern></defs><rect width="120" height="60" fill="#b4ab98"/><rect width="120" height="26" fill="url(#sky)"/><path d="M84 14 Q100 10 120 12 V34 H84Z" fill="#86847c"/><path d="M0 26 L84 24 V34 H0Z" fill="#8e8a80"/><rect x="0" y="33" width="120" height="27" fill="#b3aa96"/><path d="M0 40 H120 V48 Q60 44 0 52Z" fill="#a39d90"/><rect x="0" y="33" width="120" height="27" fill="url(#org)" opacity="0.45"/><path d="M44 59 Q80 50 120 45" stroke="#2a2a2a" stroke-width="2" fill="none"/><rect x="9" y="10" width="78" height="4" fill="#2d58b8"/><rect x="11" y="14" width="76" height="4" fill="#a4a4a8"/><rect x="3" y="20" width="36" height="3.5" fill="#2d58b8"/><rect x="5" y="23.5" width="34" height="11" fill="#5f626c"/><rect x="20" y="18" width="2" height="17" fill="#dcdcdc"/><rect x="52" y="18" width="2" height="17" fill="#dcdcdc"/><rect x="42" y="27" width="28" height="8" fill="#cfcfcf"/><rect x="44" y="33" width="24" height="3" fill="#2e2e2e"/><rect x="108" y="4" width="2" height="30" fill="#e8e8e8"/><rect x="104" y="4" width="10" height="10" fill="#dde4ee"/><rect x="105" y="8" width="8" height="2" fill="#c04848"/><rect x="105" y="11" width="8" height="2" fill="#48a050"/></svg>
<svg class="a" style="left:521px;top:454px" width="120" height="78" viewBox="0 0 120 78"><defs><pattern id="spk" width="4" height="4" patternUnits="userSpaceOnUse"><rect x="0" y="0" width="1" height="1" fill="#000" fill-opacity="0.25"/><rect x="2" y="2" width="1" height="1" fill="#fff" fill-opacity="0.15"/></pattern><pattern id="org" width="5" height="5" patternUnits="userSpaceOnUse"><rect x="1" y="1" width="1.2" height="1.2" fill="#e0893a"/><rect x="3.5" y="3.5" width="1" height="1" fill="#c8a070"/></pattern></defs><rect width="120" height="78" fill="#5a5a54"/><rect x="0" y="0" width="70" height="9" fill="#6e6e68"/><rect x="0" y="10" width="20" height="38" fill="#3c3c37"/><path d="M20 11H40V46H66V62H5V46H20Z" fill="#8c8b86"/><rect x="22" y="22" width="7" height="18" fill="#a07a50"/><rect x="35" y="24" width="5" height="18" fill="#a07a50"/><rect x="42" y="11" width="10" height="17" fill="#a9a8a2"/><rect x="52" y="10" width="14" height="18" fill="#5e5e58"/><rect x="59" y="20" width="6" height="8" fill="#b0aea6"/><rect x="12" y="54" width="12" height="7" fill="#c8c8c4"/><rect x="42" y="48" width="22" height="6" fill="#b8b8b2"/><rect x="72" y="0" width="48" height="28" fill="#62625c"/><rect x="77" y="10" width="16" height="12" fill="#a8a59c"/><rect x="93" y="12" width="18" height="16" fill="#55554f"/><rect x="102" y="0" width="18" height="10" fill="#8c8a80"/><rect x="73" y="29" width="47" height="19" fill="#6a665c"/><rect x="73" y="29" width="47" height="19" fill="url(#org)" opacity="0.5"/><rect x="72" y="48" width="48" height="30" fill="#3e3e39"/><rect x="77" y="54" width="14" height="8" fill="#8a8882"/><rect x="0" y="63" width="64" height="15" fill="#3a3a35"/><rect x="62" y="66" width="58" height="12" fill="#4e4e48"/><path d="M5 9H70M20 11V46M0 63H66M66 0V78M71 0V78M72 28H120M72 48H120M62 67H120" stroke="#a6a49c" stroke-width="1"/><rect width="120" height="78" fill="url(#spk)"/><rect x="42.5" y="28.5" width="24" height="18" fill="#3c3c37" stroke="#4fb04f" stroke-width="1.2"/></svg>
<svg class="a" style="left:643px;top:454px" width="121" height="78" viewBox="0 0 121 78"><defs><pattern id="spk" width="4" height="4" patternUnits="userSpaceOnUse"><rect x="0" y="0" width="1" height="1" fill="#000" fill-opacity="0.25"/><rect x="2" y="2" width="1" height="1" fill="#fff" fill-opacity="0.15"/></pattern><pattern id="org" width="5" height="5" patternUnits="userSpaceOnUse"><rect x="1" y="1" width="1.2" height="1.2" fill="#e0893a"/><rect x="3.5" y="3.5" width="1" height="1" fill="#c8a070"/></pattern></defs><rect width="121" height="78" fill="#393833"/><path d="M34 0H62L42 47H36Z" fill="#6c6c68"/><path d="M36 0H50L46 12H34Z" fill="#8c8c88"/><path d="M62 0H92V16H70Z" fill="#7a746a"/><rect x="62" y="0" width="30" height="16" fill="url(#org)" opacity="0.5"/><path d="M25 14L45 12L44 30L28 30Z" fill="#9c7048"/><rect x="10" y="56" width="24" height="22" fill="#8c6a4a"/><rect x="52" y="26" width="8" height="5" fill="#6a5a48"/><path d="M34 3L9 47V78M9 47H86M9 54H34M34 47V78M38 47V78M58 0L38 47M62 0L42 47M72 8L86 24V78M53 18L86 37M86 30H121" stroke="#9e9e96" stroke-width="0.9" fill="none"/><rect width="121" height="78" fill="url(#spk)"/><path d="M38 47L47 30L55 35L64 47Z" fill="none" stroke="#4fb04f" stroke-width="1.2"/></svg>
<svg class="a" style="left:765px;top:454px" width="120" height="78" viewBox="0 0 120 78"><defs><pattern id="spk" width="4" height="4" patternUnits="userSpaceOnUse"><rect x="0" y="0" width="1" height="1" fill="#000" fill-opacity="0.25"/><rect x="2" y="2" width="1" height="1" fill="#fff" fill-opacity="0.15"/></pattern><pattern id="org" width="5" height="5" patternUnits="userSpaceOnUse"><rect x="1" y="1" width="1.2" height="1.2" fill="#e0893a"/><rect x="3.5" y="3.5" width="1" height="1" fill="#c8a070"/></pattern></defs><rect width="120" height="78" fill="#46463f"/><path d="M0 0H60L0 36Z" fill="#3a3a34"/><path d="M0 36L64 0H76L0 44Z" fill="#8a8880"/><path d="M25 32H46V52H25Z" fill="#8e8c86"/><rect x="27" y="38" width="6" height="9" fill="#f0f0f0"/><rect x="0" y="44" width="8" height="9" fill="#e4e4e2"/><rect x="10" y="50" width="7" height="6" fill="#c8d8e8"/><rect x="36" y="4" width="12" height="12" fill="#a8a49a"/><rect x="74" y="5" width="8" height="5" fill="#f0f0f0"/><path d="M47 15V78M61 15V78M72 10V78M85 0V78M97 0V78M61 15H97M61 20H97M61 25H97M61 30H97M61 35H97M61 40H97M47 48H97M47 53H97M47 58H97M47 63H97M47 68H97M47 73H97M10 48V78M24 54V78M36 54V78M0 58H46M0 66H46M0 73H46M8 0V14M0 14H40M18 0V30" stroke="#b0aca0" stroke-width="0.9"/><path d="M100 0H120V78H100Z" fill="#3c3c36"/><path d="M118 8Q104 10 110 18Q118 24 108 40Q102 55 120 64M108 78Q100 70 108 66" stroke="#9c9a90" stroke-width="1.8" fill="none"/><rect width="120" height="78" fill="url(#spk)"/><rect x="48.5" y="26.5" width="10" height="19" fill="#3a3a34" stroke="#4fb04f" stroke-width="1.2"/></svg>
<svg class="a" style="left:887px;top:454px" width="120" height="78" viewBox="0 0 120 78"><defs><pattern id="spk" width="4" height="4" patternUnits="userSpaceOnUse"><rect x="0" y="0" width="1" height="1" fill="#000" fill-opacity="0.25"/><rect x="2" y="2" width="1" height="1" fill="#fff" fill-opacity="0.15"/></pattern><pattern id="org" width="5" height="5" patternUnits="userSpaceOnUse"><rect x="1" y="1" width="1.2" height="1.2" fill="#e0893a"/><rect x="3.5" y="3.5" width="1" height="1" fill="#c8a070"/></pattern></defs><rect width="120" height="78" fill="#6c6a62"/><path d="M8 0H85L75 24L30 0Z" fill="#4e4e48"/><path d="M28 12L52 26L40 42L18 28Z" fill="#3c3c36"/><path d="M52 18L66 28L58 38L46 30Z" fill="#45453f"/><path d="M85 0H120V30L90 22Z" fill="#4a4a44"/><path d="M78 30H120V78H70Z" fill="#8e8878"/><path d="M86 36L120 56V70L80 44Z" fill="#c4b89a"/><path d="M55 52L75 60L68 78H45Z" fill="#3e3e38"/><rect x="10" y="46" width="24" height="22" fill="#ddd8c8"/><rect x="18" y="44" width="12" height="6" fill="#d0dce6"/><rect x="12" y="53" width="10" height="7" fill="#5a5a55"/><rect x="34" y="60" width="8" height="8" fill="#d8d4c4"/><rect x="52" y="69" width="7" height="7" fill="#e8ecee"/><path d="M5 0V78M0 22L62 56L120 66M90 0L42 78M30 2L75 28M26 36L50 8" stroke="#a4a298" stroke-width="2.2" fill="none"/><rect width="120" height="78" fill="url(#spk)"/><path d="M45 42L53 29L64 37L54 51Z" fill="none" stroke="#4fb04f" stroke-width="1.2"/></svg>
<div class="a" style="left:277px;top:431px;width:1px;height:507px;background:#1c1420;"></div>
<div class="a" style="left:1008px;top:431px;width:1px;height:507px;background:#1c1420;"></div>
<div class="t" style="left:265.5px;width:130px;text-align:right;top:537.58px;font-size:14.5px;line-height:16.67px;color:#000;font-weight:normal;">Address</div>
<div class="t" style="left:400.0px;width:120px;text-align:center;top:537.58px;font-size:14.5px;line-height:16.67px;color:#000;font-weight:normal;">4915 Bloomfield</div>
<div class="t" style="left:521.5px;width:120px;text-align:center;top:537.58px;font-size:14.5px;line-height:16.67px;color:#000;font-weight:normal;">4665 Ivey Dr</div>
<div class="t" style="left:643.5px;width:120px;text-align:center;top:537.58px;font-size:14.5px;line-height:16.67px;color:#000;font-weight:normal;">235 Mercer Jct</div>
<div class="t" style="left:765.5px;width:120px;text-align:center;top:537.58px;font-size:14.5px;line-height:16.67px;color:#000;font-weight:normal;">1740 Dixon Dr</div>
<div class="t" style="left:887.0px;width:120px;text-align:center;top:537.58px;font-size:14.5px;line-height:16.67px;color:#000;font-weight:normal;">1484 Gilmer St</div>
<div class="t" style="left:265.5px;width:130px;text-align:right;top:558.28px;font-size:14.5px;line-height:16.67px;color:#000;font-weight:normal;">City</div>
<div class="t" style="left:400.0px;width:120px;text-align:center;top:558.28px;font-size:14.5px;line-height:16.67px;color:#000;font-weight:normal;">Macon</div>
<div class="t" style="left:521.5px;width:120px;text-align:center;top:558.28px;font-size:14.5px;line-height:16.67px;color:#000;font-weight:normal;">Macon</div>
<div class="t" style="left:643.5px;width:120px;text-align:center;top:558.28px;font-size:14.5px;line-height:16.67px;color:#000;font-weight:normal;">Macon</div>
<div class="t" style="left:765.5px;width:120px;text-align:center;top:558.28px;font-size:14.5px;line-height:16.67px;color:#000;font-weight:normal;">Macon</div>
<div class="t" style="left:887.0px;width:120px;text-align:center;top:558.28px;font-size:14.5px;line-height:16.67px;color:#000;font-weight:normal;">Macon</div>
<div class="t" style="left:265.5px;width:130px;text-align:right;top:578.18px;font-size:14.5px;line-height:16.67px;color:#000;font-weight:normal;">State</div>
<div class="t" style="left:400.0px;width:120px;text-align:center;top:578.18px;font-size:14.5px;line-height:16.67px;color:#000;font-weight:normal;">GA</div>
<div class="t" style="left:521.5px;width:120px;text-align:center;top:578.18px;font-size:14.5px;line-height:16.67px;color:#000;font-weight:normal;">GA</div>
<div class="t" style="left:643.5px;width:120px;text-align:center;top:578.18px;font-size:14.5px;line-height:16.67px;color:#000;font-weight:normal;">GA</div>
<div class="t" style="left:765.5px;width:120px;text-align:center;top:578.18px;font-size:14.5px;line-height:16.67px;color:#000;font-weight:normal;">GA</div>
<div class="t" style="left:887.0px;width:120px;text-align:center;top:578.18px;font-size:14.5px;line-height:16.67px;color:#000;font-weight:normal;">GA</div>
<div class="t" style="left:265.5px;width:130px;text-align:right;top:598.08px;font-size:14.5px;line-height:16.67px;color:#000;font-weight:normal;">Date</div>
<div class="t" style="left:400.0px;width:120px;text-align:center;top:598.08px;font-size:14.5px;line-height:16.67px;color:#000;font-weight:normal;">4/19/2022</div>
<div class="t" style="left:521.5px;width:120px;text-align:center;top:598.08px;font-size:14.5px;line-height:16.67px;color:#000;font-weight:normal;">3/4/2022</div>
<div class="t" style="left:643.5px;width:120px;text-align:center;top:598.08px;font-size:14.5px;line-height:16.67px;color:#000;font-weight:normal;">12/10/2021</div>
<div class="t" style="left:765.5px;width:120px;text-align:center;top:598.08px;font-size:14.5px;line-height:16.67px;color:#000;font-weight:normal;">8/9/2021</div>
<div class="t" style="left:887.0px;width:120px;text-align:center;top:598.08px;font-size:14.5px;line-height:16.67px;color:#000;font-weight:normal;">4/29/2021</div>
<div class="t" style="left:265.5px;width:130px;text-align:right;top:618.08px;font-size:14.5px;line-height:16.67px;color:#000;font-weight:normal;">Price</div>
<div class="t" style="left:400.0px;width:120px;text-align:center;top:618.08px;font-size:14.5px;line-height:16.67px;color:#000;font-weight:normal;">--</div>
<div class="t" style="left:521.5px;width:120px;text-align:center;top:618.08px;font-size:14.5px;line-height:16.67px;color:#000;font-weight:normal;">$95,000</div>
<div class="t" style="left:643.5px;width:120px;text-align:center;top:618.08px;font-size:14.5px;line-height:16.67px;color:#000;font-weight:normal;">$30,000</div>
<div class="t" style="left:765.5px;width:120px;text-align:center;top:618.08px;font-size:14.5px;line-height:16.67px;color:#000;font-weight:normal;">$40,000</div>
<div class="t" style="left:887.0px;width:120px;text-align:center;top:618.08px;font-size:14.5px;line-height:16.67px;color:#000;font-weight:normal;">$88,000</div>
<div class="t" style="left:265.5px;width:130px;text-align:right;top:638.08px;font-size:14.5px;line-height:16.67px;color:#000;font-weight:normal;">Acres</div>
<div class="t" style="left:400.0px;width:120px;text-align:center;top:638.08px;font-size:14.5px;line-height:16.67px;color:#000;font-weight:normal;">0.55</div>
<div class="t" style="left:521.5px;width:120px;text-align:center;top:638.08px;font-size:14.5px;line-height:16.67px;color:#000;font-weight:normal;">2.06</div>
<div class="t" style="left:643.5px;width:120px;text-align:center;top:638.08px;font-size:14.5px;line-height:16.67px;color:#000;font-weight:normal;">1.24</div>
<div class="t" style="left:765.5px;width:120px;text-align:center;top:638.08px;font-size:14.5px;line-height:16.67px;color:#000;font-weight:normal;">1.00</div>
<div class="t" style="left:887.0px;width:120px;text-align:center;top:638.08px;font-size:14.5px;line-height:16.67px;color:#000;font-weight:normal;">1.03</div>
<div class="t" style="left:265.5px;width:130px;text-align:right;top:657.88px;font-size:14.5px;line-height:16.67px;color:#000;font-weight:normal;">Acre Unit Price</div>
<div class="t" style="left:521.5px;width:120px;text-align:center;top:657.88px;font-size:14.5px;line-height:16.67px;color:#000;font-weight:normal;">$46,117</div>
<div class="t" style="left:643.5px;width:120px;text-align:center;top:657.88px;font-size:14.5px;line-height:16.67px;color:#000;font-weight:normal;">$24,194</div>
<div class="t" style="left:765.5px;width:120px;text-align:center;top:657.88px;font-size:14.5px;line-height:16.67px;color:#000;font-weight:normal;">$40,000</div>
<div class="t" style="left:887.0px;width:120px;text-align:center;top:657.88px;font-size:14.5px;line-height:16.67px;color:#000;font-weight:normal;">$85,437</div>
<div class="a" style="left:277px;top:676.3px;width:1464px;height:18.5px;background:#808080;"></div>
<div class="a" style="left:277px;top:675px;width:1464px;height:1px;background:#1c1420;"></div>
<div class="a" style="left:277px;top:695px;width:1464px;height:1px;background:#1c1420;"></div>
<div class="t" style="left:280.8px;top:678.23px;font-size:14.55px;line-height:16.73px;color:#ffffff;font-weight:bold;">Transaction Adjustments</div>
<div class="t" style="left:265.5px;width:130px;text-align:right;top:695.18px;font-size:14.5px;line-height:16.67px;color:#000;font-weight:normal;">Property Rights</div>
<div class="t" style="left:400.0px;width:120px;text-align:center;top:697.78px;font-size:14.5px;line-height:16.67px;color:#000;font-weight:normal;">Fee Simple</div>
<div class="t" style="left:538.7px;width:40px;text-align:right;top:697.08px;font-size:14.5px;line-height:16.67px;color:#000;font-weight:normal;">0</div>
<div class="t" style="left:568.5px;width:60px;text-align:right;top:697.08px;font-size:14.5px;line-height:16.67px;color:#000;font-weight:normal;">0.0%</div>
<div class="t" style="left:660.7px;width:40px;text-align:right;top:697.08px;font-size:14.5px;line-height:16.67px;color:#000;font-weight:normal;">0</div>
<div class="t" style="left:690.5px;width:60px;text-align:right;top:697.08px;font-size:14.5px;line-height:16.67px;color:#000;font-weight:normal;">0.0%</div>
<div class="t" style="left:782.7px;width:40px;text-align:right;top:697.08px;font-size:14.5px;line-height:16.67px;color:#000;font-weight:normal;">0</div>
<div class="t" style="left:812.5px;width:60px;text-align:right;top:697.08px;font-size:14.5px;line-height:16.67px;color:#000;font-weight:normal;">0.0%</div>
<div class="t" style="left:904.7px;width:40px;text-align:right;top:697.08px;font-size:14.5px;line-height:16.67px;color:#000;font-weight:normal;">0</div>
<div class="t" style="left:934.5px;width:60px;text-align:right;top:697.08px;font-size:14.5px;line-height:16.67px;color:#000;font-weight:normal;">0.0%</div>
<div class="t" style="left:1057px;width:60px;text-align:right;top:697.08px;font-size:14.5px;line-height:16.67px;color:#000;font-weight:normal;">0.0%</div>
<div class="t" style="left:1179px;width:60px;text-align:right;top:697.08px;font-size:14.5px;line-height:16.67px;color:#000;font-weight:normal;">0.0%</div>
<div class="t" style="left:1301px;width:60px;text-align:right;top:697.08px;font-size:14.5px;line-height:16.67px;color:#000;font-weight:normal;">0.0%</div>
<div class="t" style="left:1423px;width:60px;text-align:right;top:697.08px;font-size:14.5px;line-height:16.67px;color:#000;font-weight:normal;">0.0%</div>
<div class="t" style="left:1545px;width:60px;text-align:right;top:697.08px;font-size:14.5px;line-height:16.67px;color:#000;font-weight:normal;">0.0%</div>
<div class="t" style="left:1667px;width:60px;text-align:right;top:697.08px;font-size:14.5px;line-height:16.67px;color:#000;font-weight:normal;">0.0%</div>
<div class="t" style="left:265.5px;width:130px;text-align:right;top:716.38px;font-size:14.5px;line-height:16.67px;color:#000;font-weight:normal;">Financing</div>
<div class="t" style="left:400.0px;width:120px;text-align:center;top:717.38px;font-size:14.5px;line-height:16.67px;color:#000;font-weight:normal;">Conventional</div>
<div class="t" style="left:538.7px;width:40px;text-align:right;top:717.68px;font-size:14.5px;line-height:16.67px;color:#000;font-weight:normal;">0</div>
<div class="t" style="left:568.5px;width:60px;text-align:right;top:717.68px;font-size:14.5px;line-height:16.67px;color:#000;font-weight:normal;">0.0%</div>
<div class="t" style="left:660.7px;width:40px;text-align:right;top:717.68px;font-size:14.5px;line-height:16.67px;color:#000;font-weight:normal;">0</div>
<div class="t" style="left:690.5px;width:60px;text-align:right;top:717.68px;font-size:14.5px;line-height:16.67px;color:#000;font-weight:normal;">0.0%</div>
<div class="t" style="left:782.7px;width:40px;text-align:right;top:717.68px;font-size:14.5px;line-height:16.67px;color:#000;font-weight:normal;">0</div>
<div class="t" style="left:812.5px;width:60px;text-align:right;top:717.68px;font-size:14.5px;line-height:16.67px;color:#000;font-weight:normal;">0.0%</div>
<div class="t" style="left:904.7px;width:40px;text-align:right;top:717.68px;font-size:14.5px;line-height:16.67px;color:#000;font-weight:normal;">0</div>
<div class="t" style="left:934.5px;width:60px;text-align:right;top:717.68px;font-size:14.5px;line-height:16.67px;color:#000;font-weight:normal;">0.0%</div>
<div class="t" style="left:1057px;width:60px;text-align:right;top:717.68px;font-size:14.5px;line-height:16.67px;color:#000;font-weight:normal;">0.0%</div>
<div class="t" style="left:1179px;width:60px;text-align:right;top:717.68px;font-size:14.5px;line-height:16.67px;color:#000;font-weight:normal;">0.0%</div>
<div class="t" style="left:1301px;width:60px;text-align:right;top:717.68px;font-size:14.5px;line-height:16.67px;color:#000;font-weight:normal;">0.0%</div>
<div class="t" style="left:1423px;width:60px;text-align:right;top:717.68px;font-size:14.5px;line-height:16.67px;color:#000;font-weight:normal;">0.0%</div>
<div class="t" style="left:1545px;width:60px;text-align:right;top:717.68px;font-size:14.5px;line-height:16.67px;color:#000;font-weight:normal;">0.0%</div>
<div class="t" style="left:1667px;width:60px;text-align:right;top:717.68px;font-size:14.5px;line-height:16.67px;color:#000;font-weight:normal;">0.0%</div>
<div class="t" style="left:265.5px;width:130px;text-align:right;top:736.38px;font-size:14.5px;line-height:16.67px;color:#000;font-weight:normal;">Sale</div>
<div class="t" style="left:400.0px;width:120px;text-align:center;top:736.78px;font-size:14.5px;line-height:16.67px;color:#000;font-weight:normal;">Cash</div>
<div class="t" style="left:538.7px;width:40px;text-align:right;top:737.28px;font-size:14.5px;line-height:16.67px;color:#000;font-weight:normal;">0</div>
<div class="t" style="left:568.5px;width:60px;text-align:right;top:737.28px;font-size:14.5px;line-height:16.67px;color:#000;font-weight:normal;">0.0%</div>
<div class="t" style="left:660.7px;width:40px;text-align:right;top:737.28px;font-size:14.5px;line-height:16.67px;color:#000;font-weight:normal;">0</div>
<div class="t" style="left:690.5px;width:60px;text-align:right;top:737.28px;font-size:14.5px;line-height:16.67px;color:#000;font-weight:normal;">0.0%</div>
<div class="t" style="left:782.7px;width:40px;text-align:right;top:737.28px;font-size:14.5px;line-height:16.67px;color:#000;font-weight:normal;">0</div>
<div class="t" style="left:812.5px;width:60px;text-align:right;top:737.28px;font-size:14.5px;line-height:16.67px;color:#000;font-weight:normal;">0.0%</div>
<div class="t" style="left:904.7px;width:40px;text-align:right;top:737.28px;font-size:14.5px;line-height:16.67px;color:#000;font-weight:normal;">0</div>
<div class="t" style="left:934.5px;width:60px;text-align:right;top:737.28px;font-size:14.5px;line-height:16.67px;color:#000;font-weight:normal;">0.0%</div>
<div class="t" style="left:1057px;width:60px;text-align:right;top:737.28px;font-size:14.5px;line-height:16.67px;color:#000;font-weight:normal;">0.0%</div>
<div class="t" style="left:1179px;width:60px;text-align:right;top:737.28px;font-size:14.5px;line-height:16.67px;color:#000;font-weight:normal;">0.0%</div>
<div class="t" style="left:1301px;width:60px;text-align:right;top:737.28px;font-size:14.5px;line-height:16.67px;color:#000;font-weight:normal;">0.0%</div>
<div class="t" style="left:1423px;width:60px;text-align:right;top:737.28px;font-size:14.5px;line-height:16.67px;color:#000;font-weight:normal;">0.0%</div>
<div class="t" style="left:1545px;width:60px;text-align:right;top:737.28px;font-size:14.5px;line-height:16.67px;color:#000;font-weight:normal;">0.0%</div>
<div class="t" style="left:1667px;width:60px;text-align:right;top:737.28px;font-size:14.5px;line-height:16.67px;color:#000;font-weight:normal;">0.0%</div>
<div class="a" style="left:277px;top:755px;width:1464px;height:1px;background:#1c1420;"></div>
<div class="t" style="left:280.6px;top:758.28px;font-size:14.5px;line-height:16.67px;color:#000;font-weight:normal;">Expend. After Sale</div>
<div class="t" style="left:541.5px;width:80px;text-align:center;top:758.08px;font-size:14.5px;line-height:16.67px;color:#000;font-weight:normal;">$0</div>
<div class="t" style="left:663.5px;width:80px;text-align:center;top:758.08px;font-size:14.5px;line-height:16.67px;color:#000;font-weight:normal;">$0</div>
<div class="t" style="left:785.5px;width:80px;text-align:center;top:758.08px;font-size:14.5px;line-height:16.67px;color:#000;font-weight:normal;">$0</div>
<div class="t" style="left:907.0px;width:80px;text-align:center;top:758.08px;font-size:14.5px;line-height:16.67px;color:#000;font-weight:normal;">$0</div>
<div class="t" style="left:1030.0px;width:80px;text-align:center;top:758.08px;font-size:14.5px;line-height:16.67px;color:#000;font-weight:normal;">$0</div>
<div class="t" style="left:1152.0px;width:80px;text-align:center;top:758.08px;font-size:14.5px;line-height:16.67px;color:#000;font-weight:normal;">$0</div>
<div class="t" style="left:1274.0px;width:80px;text-align:center;top:758.08px;font-size:14.5px;line-height:16.67px;color:#000;font-weight:normal;">$0</div>
<div class="t" style="left:1396.0px;width:80px;text-align:center;top:758.08px;font-size:14.5px;line-height:16.67px;color:#000;font-weight:normal;">$0</div>
<div class="t" style="left:1518.0px;width:80px;text-align:center;top:758.08px;font-size:14.5px;line-height:16.67px;color:#000;font-weight:normal;">$0</div>
<div class="t" style="left:1640.0px;width:80px;text-align:center;top:758.08px;font-size:14.5px;line-height:16.67px;color:#000;font-weight:normal;">$0</div>
<div class="a" style="left:277px;top:775px;width:1464px;height:1px;background:#1c1420;"></div>
<div class="a" style="left:277px;top:776px;width:1464px;height:19px;background:#f2f2f2;"></div>
<div class="t" style="left:280.6px;top:776.58px;font-size:14.5px;line-height:16.67px;color:#000;font-weight:bold;">Adjusted Acre Unit Price</div>
<div class="t" style="left:531.5px;width:100px;text-align:center;top:776.58px;font-size:14.5px;line-height:16.67px;color:#000;font-weight:bold;">$46,117</div>
<div class="t" style="left:653.5px;width:100px;text-align:center;top:776.58px;font-size:14.5px;line-height:16.67px;color:#000;font-weight:bold;">$24,194</div>
<div class="t" style="left:775.5px;width:100px;text-align:center;top:776.58px;font-size:14.5px;line-height:16.67px;color:#000;font-weight:bold;">$40,000</div>
<div class="t" style="left:897.0px;width:100px;text-align:center;top:776.58px;font-size:14.5px;line-height:16.67px;color:#000;font-weight:bold;">$85,437</div>
<div class="t" style="left:1020.0px;width:100px;text-align:center;top:776.58px;font-size:14.5px;line-height:16.67px;color:#000;font-weight:bold;">$0</div>
<div class="t" style="left:1142.0px;width:100px;text-align:center;top:776.58px;font-size:14.5px;line-height:16.67px;color:#000;font-weight:bold;">$0</div>
<div class="t" style="left:1264.0px;width:100px;text-align:center;top:776.58px;font-size:14.5px;line-height:16.67px;color:#000;font-weight:bold;">$0</div>
<div class="t" style="left:1386.0px;width:100px;text-align:center;top:776.58px;font-size:14.5px;line-height:16.67px;color:#000;font-weight:bold;">$0</div>
<div class="t" style="left:1508.0px;width:100px;text-align:center;top:776.58px;font-size:14.5px;line-height:16.67px;color:#000;font-weight:bold;">$0</div>
<div class="t" style="left:1630.0px;width:100px;text-align:center;top:776.58px;font-size:14.5px;line-height:16.67px;color:#000;font-weight:bold;">$0</div>
<div class="a" style="left:277px;top:795px;width:1464px;height:1px;background:#1c1420;"></div>
<div class="t" style="left:280.6px;top:800.72px;font-size:10.7px;line-height:12.30px;color:#000;font-weight:normal;">Market Trends Through</div>
<div class="t" style="left:401px;top:799.18px;font-size:12.4px;line-height:14.26px;color:#000;font-weight:normal;">4/19/2022</div>
<div class="t" style="left:457.20000000000005px;width:60px;text-align:right;top:797.08px;font-size:14.5px;line-height:16.67px;color:#000;font-weight:normal;">0.0%</div>
<div class="t" style="left:541.5px;width:80px;text-align:center;top:797.28px;font-size:14.5px;line-height:16.67px;color:#000;font-weight:normal;">0.0%</div>
<div class="t" style="left:663.5px;width:80px;text-align:center;top:797.28px;font-size:14.5px;line-height:16.67px;color:#000;font-weight:normal;">0.0%</div>
<div class="t" style="left:785.5px;width:80px;text-align:center;top:797.28px;font-size:14.5px;line-height:16.67px;color:#000;font-weight:normal;">0.0%</div>
<div class="t" style="left:907.0px;width:80px;text-align:center;top:797.28px;font-size:14.5px;line-height:16.67px;color:#000;font-weight:normal;">0.0%</div>
<div class="t" style="left:1030.0px;width:80px;text-align:center;top:797.28px;font-size:14.5px;line-height:16.67px;color:#000;font-weight:normal;">0.0%</div>
<div class="t" style="left:1152.0px;width:80px;text-align:center;top:797.28px;font-size:14.5px;line-height:16.67px;color:#000;font-weight:normal;">0.0%</div>
<div class="t" style="left:1274.0px;width:80px;text-align:center;top:797.28px;font-size:14.5px;line-height:16.67px;color:#000;font-weight:normal;">0.0%</div>
<div class="t" style="left:1396.0px;width:80px;text-align:center;top:797.28px;font-size:14.5px;line-height:16.67px;color:#000;font-weight:normal;">0.0%</div>
<div class="t" style="left:1518.0px;width:80px;text-align:center;top:797.28px;font-size:14.5px;line-height:16.67px;color:#000;font-weight:normal;">0.0%</div>
<div class="t" style="left:1640.0px;width:80px;text-align:center;top:797.28px;font-size:14.5px;line-height:16.67px;color:#000;font-weight:normal;">0.0%</div>
<div class="a" style="left:277px;top:815px;width:1464px;height:1px;background:#1c1420;"></div>
<div class="a" style="left:277px;top:816.5px;width:1464px;height:18.5px;background:#f2f2f2;"></div>
<div class="t" style="left:280.6px;top:817.58px;font-size:14.5px;line-height:16.67px;color:#000;font-weight:bold;">Adjusted Acre Unit Price</div>
<div class="t" style="left:531.5px;width:100px;text-align:center;top:817.58px;font-size:14.5px;line-height:16.67px;color:#000;font-weight:bold;">$46,117</div>
<div class="t" style="left:653.5px;width:100px;text-align:center;top:817.58px;font-size:14.5px;line-height:16.67px;color:#000;font-weight:bold;">$24,194</div>
<div class="t" style="left:775.5px;width:100px;text-align:center;top:817.58px;font-size:14.5px;line-height:16.67px;color:#000;font-weight:bold;">$40,000</div>
<div class="t" style="left:897.0px;width:100px;text-align:center;top:817.58px;font-size:14.5px;line-height:16.67px;color:#000;font-weight:bold;">$85,437</div>
<div class="t" style="left:1020.0px;width:100px;text-align:center;top:817.58px;font-size:14.5px;line-height:16.67px;color:#000;font-weight:bold;">$0</div>
<div class="t" style="left:1142.0px;width:100px;text-align:center;top:817.58px;font-size:14.5px;line-height:16.67px;color:#000;font-weight:bold;">$0</div>
<div class="t" style="left:1264.0px;width:100px;text-align:center;top:817.58px;font-size:14.5px;line-height:16.67px;color:#000;font-weight:bold;">$0</div>
<div class="t" style="left:1386.0px;width:100px;text-align:center;top:817.58px;font-size:14.5px;line-height:16.67px;color:#000;font-weight:bold;">$0</div>
<div class="t" style="left:1508.0px;width:100px;text-align:center;top:817.58px;font-size:14.5px;line-height:16.67px;color:#000;font-weight:bold;">$0</div>
<div class="t" style="left:1630.0px;width:100px;text-align:center;top:817.58px;font-size:14.5px;line-height:16.67px;color:#000;font-weight:bold;">$0</div>
<div class="a" style="left:277px;top:836.8px;width:1464px;height:17.800000000000068px;background:#808080;"></div>
<div class="a" style="left:277px;top:836px;width:1464px;height:1px;background:#1c1420;"></div>
<div class="a" style="left:277px;top:855px;width:1464px;height:1px;background:#1c1420;"></div>
<div class="t" style="left:280.8px;top:838.03px;font-size:14.55px;line-height:16.73px;color:#ffffff;font-weight:bold;">Characteristics Adjustments</div>
<div class="a" style="left:398px;top:855px;width:1px;height:83px;background:#1c1420;"></div>
<div class="t" style="left:265.5px;width:130px;text-align:right;top:858.18px;font-size:14.5px;line-height:16.67px;color:#000;font-weight:normal;">Location</div>
<div class="t" style="left:265.5px;width:130px;text-align:right;top:877.28px;font-size:14.5px;line-height:16.67px;color:#000;font-weight:normal;">% Adjustment</div>
<div class="t" style="left:265.5px;width:130px;text-align:right;top:897.78px;font-size:14.5px;line-height:16.67px;color:#000;font-weight:normal;">Qualitative</div>
<div class="t" style="left:265.5px;width:130px;text-align:right;top:917.98px;font-size:14.5px;line-height:16.67px;color:#000;font-weight:normal;">$ Adjustment</div>
<div class="t" style="left:541.5px;width:80px;text-align:center;top:877.28px;font-size:14.5px;line-height:16.67px;color:#000;font-weight:normal;">0%</div>
<div class="t" style="left:541.5px;width:80px;text-align:center;top:897.78px;font-size:14.5px;line-height:16.67px;color:#000;font-weight:normal;">Similar</div>
<div class="t" style="left:541.5px;width:80px;text-align:center;top:917.98px;font-size:14.5px;line-height:16.67px;color:#000;font-weight:normal;">$0</div>
<div class="t" style="left:663.5px;width:80px;text-align:center;top:877.28px;font-size:14.5px;line-height:16.67px;color:#000;font-weight:normal;">0%</div>
<div class="t" style="left:663.5px;width:80px;text-align:center;top:897.78px;font-size:14.5px;line-height:16.67px;color:#000;font-weight:normal;">Similar</div>
<div class="t" style="left:663.5px;width:80px;text-align:center;top:917.98px;font-size:14.5px;line-height:16.67px;color:#000;font-weight:normal;">$0</div>
<div class="t" style="left:785.5px;width:80px;text-align:center;top:877.28px;font-size:14.5px;line-height:16.67px;color:#000;font-weight:normal;">0%</div>
<div class="t" style="left:785.5px;width:80px;text-align:center;top:897.78px;font-size:14.5px;line-height:16.67px;color:#000;font-weight:normal;">Similar</div>
<div class="t" style="left:785.5px;width:80px;text-align:center;top:917.98px;font-size:14.5px;line-height:16.67px;color:#000;font-weight:normal;">$0</div>
<div class="t" style="left:907.0px;width:80px;text-align:center;top:877.28px;font-size:14.5px;line-height:16.67px;color:#000;font-weight:normal;">0%</div>
<div class="t" style="left:907.0px;width:80px;text-align:center;top:897.78px;font-size:14.5px;line-height:16.67px;color:#000;font-weight:normal;">Similar</div>
<div class="t" style="left:907.0px;width:80px;text-align:center;top:917.98px;font-size:14.5px;line-height:16.67px;color:#000;font-weight:normal;">$0</div>
<div class="t" style="left:1030.0px;width:80px;text-align:center;top:877.28px;font-size:14.5px;line-height:16.67px;color:#000;font-weight:normal;">0%</div>
<div class="t" style="left:1030.0px;width:80px;text-align:center;top:897.78px;font-size:14.5px;line-height:16.67px;color:#000;font-weight:normal;">Similar</div>
<div class="t" style="left:1030.0px;width:80px;text-align:center;top:917.98px;font-size:14.5px;line-height:16.67px;color:#000;font-weight:normal;">$0</div>
<div class="t" style="left:1152.0px;width:80px;text-align:center;top:877.28px;font-size:14.5px;line-height:16.67px;color:#000;font-weight:normal;">0%</div>
<div class="t" style="left:1152.0px;width:80px;text-align:center;top:897.78px;font-size:14.5px;line-height:16.67px;color:#000;font-weight:normal;">Similar</div>
<div class="t" style="left:1152.0px;width:80px;text-align:center;top:917.98px;font-size:14.5px;line-height:16.67px;color:#000;font-weight:normal;">$0</div>
<div class="t" style="left:1274.0px;width:80px;text-align:center;top:877.28px;font-size:14.5px;line-height:16.67px;color:#000;font-weight:normal;">0%</div>
<div class="t" style="left:1274.0px;width:80px;text-align:center;top:897.78px;font-size:14.5px;line-height:16.67px;color:#000;font-weight:normal;">Similar</div>
<div class="t" style="left:1274.0px;width:80px;text-align:center;top:917.98px;font-size:14.5px;line-height:16.67px;color:#000;font-weight:normal;">$0</div>
<div class="t" style="left:1396.0px;width:80px;text-align:center;top:877.28px;font-size:14.5px;line-height:16.67px;color:#000;font-weight:normal;">0%</div>
<div class="t" style="left:1396.0px;width:80px;text-align:center;top:897.78px;font-size:14.5px;line-height:16.67px;color:#000;font-weight:normal;">Similar</div>
<div class="t" style="left:1396.0px;width:80px;text-align:center;top:917.98px;font-size:14.5px;line-height:16.67px;color:#000;font-weight:normal;">$0</div>
<div class="t" style="left:1518.0px;width:80px;text-align:center;top:877.28px;font-size:14.5px;line-height:16.67px;color:#000;font-weight:normal;">0%</div>
<div class="t" style="left:1518.0px;width:80px;text-align:center;top:897.78px;font-size:14.5px;line-height:16.67px;color:#000;font-weight:normal;">Similar</div>
<div class="t" style="left:1518.0px;width:80px;text-align:center;top:917.98px;font-size:14.5px;line-height:16.67px;color:#000;font-weight:normal;">$0</div>
<div class="t" style="left:1640.0px;width:80px;text-align:center;top:877.28px;font-size:14.5px;line-height:16.67px;color:#000;font-weight:normal;">0%</div>
<div class="t" style="left:1640.0px;width:80px;text-align:center;top:897.78px;font-size:14.5px;line-height:16.67px;color:#000;font-weight:normal;">Similar</div>
<div class="t" style="left:1640.0px;width:80px;text-align:center;top:917.98px;font-size:14.5px;line-height:16.67px;color:#000;font-weight:normal;">$0</div>
<div class="a" style="left:398px;top:915px;width:1343px;height:1px;background:#1c1420;"></div>
<div class="a" style="left:277px;top:935px;width:1464px;height:1px;background:#a8a8a8;"></div>
<div class="a" style="left:1870px;top:914px;width:27px;height:23px;border:1px solid #4a6a50;"></div>
<div class="a" style="left:1897px;top:168px;width:17px;height:770px;background:#2c2e2e;"></div>
<svg class="a" style="left:1899px;top:171px" width="13" height="10" viewBox="0 0 13 10"><path d="M1 9L6.5 1.5L12 9Z" fill="#c8c8c8"/></svg>
<div class="a" style="left:1902px;top:185px;width:10px;height:38px;border-radius:4px;background:#a9aaa4;"></div>
<svg class="a" style="left:1899px;top:927px" width="13" height="10" viewBox="0 0 13 10"><path d="M1 1L6.5 8.5L12 1Z" fill="#c8c8c8"/></svg>
<div class="a" style="left:0px;top:938px;width:1914px;height:30px;background:#5a6062;"></div>
<div class="a" style="left:0px;top:939px;width:1692px;height:1px;background:#a8a8a4;"></div>
<div class="a" style="left:0px;top:966px;width:1914px;height:2px;background:#2e3030;"></div>
<svg class="a" style="left:24px;top:947px" width="40" height="12" viewBox="0 0 40 12"><path d="M6 1L1 6L6 11Z" fill="#a8a8a4"/><path d="M32 1L37 6L32 11Z" fill="#f0f0f0"/></svg>
<div class="a" style="left:101px;top:942px;width:70px;height:21.5px;background:#333d4f;"></div>
<div class="t" style="left:91.0px;width:90px;text-align:center;top:945.69px;font-size:12.5px;line-height:14.37px;color:#eeeeee;font-weight:normal;">File Info</div>
<div class="a" style="left:176px;top:942px;width:55px;height:21.5px;background:#333d4f;"></div>
<div class="t" style="left:166.0px;width:75px;text-align:center;top:945.69px;font-size:12.5px;line-height:14.37px;color:#eeeeee;font-weight:normal;">Scope</div>
<div class="a" style="left:236px;top:942px;width:117px;height:21.5px;background:#333d4f;"></div>
<div class="t" style="left:226.0px;width:137px;text-align:center;top:945.69px;font-size:12.5px;line-height:14.37px;color:#eeeeee;font-weight:normal;">Dates, Premises</div>
<div class="a" style="left:358px;top:942px;width:130px;height:21.5px;background:#333d4f;"></div>
<div class="t" style="left:348.0px;width:150px;text-align:center;top:945.69px;font-size:12.5px;line-height:14.37px;color:#eeeeee;font-weight:normal;">Contracts, History</div>
<div class="a" style="left:492.5px;top:942px;width:91.5px;height:21.5px;background:#414d63;"></div>
<div class="t" style="left:482.5px;width:111.5px;text-align:center;top:945.69px;font-size:12.5px;line-height:14.37px;color:#eeeeee;font-weight:normal;">Assessment</div>
<div class="a" style="left:589px;top:942px;width:94px;height:21.5px;background:#7cb6e6;"></div>
<div class="t" style="left:579.0px;width:114px;text-align:center;top:945.69px;font-size:12.5px;line-height:14.37px;color:#1a1a1a;font-weight:normal;">Market Area</div>
<div class="a" style="left:688px;top:942px;width:122px;height:21.5px;background:#7cb6e6;"></div>
<div class="t" style="left:678.0px;width:142px;text-align:center;top:945.69px;font-size:12.5px;line-height:14.37px;color:#1a1a1a;font-weight:normal;">Market Analytics</div>
<div class="a" style="left:815px;top:942px;width:145px;height:21.5px;background:#7cb6e6;"></div>
<div class="t" style="left:805.0px;width:165px;text-align:center;top:945.69px;font-size:12.5px;line-height:14.37px;color:#1a1a1a;font-weight:normal;">Submarket Analytics</div>
<div class="a" style="left:964.6px;top:942px;width:42.89999999999998px;height:21.5px;background:#cfe2ec;"></div>
<div class="t" style="left:954.5999999999999px;width:62.89999999999998px;text-align:center;top:945.69px;font-size:12.5px;line-height:14.37px;color:#1a1a1a;font-weight:normal;">Site</div>
<div class="a" style="left:1012px;top:942px;width:108px;height:21.5px;background:#cfe2ec;"></div>
<div class="t" style="left:1002.0px;width:128px;text-align:center;top:945.69px;font-size:12.5px;line-height:14.37px;color:#1a1a1a;font-weight:normal;">Improvements</div>
<div class="a" style="left:1124.6px;top:942px;width:63.40000000000009px;height:21.5px;background:#cfe2ec;"></div>
<div class="t" style="left:1114.6px;width:83.40000000000009px;text-align:center;top:945.69px;font-size:12.5px;line-height:14.37px;color:#1a1a1a;font-weight:normal;">Zoning</div>
<div class="a" style="left:1277px;top:942px;width:46px;height:21.5px;background:#1c101c;"></div>
<div class="t" style="left:1267.0px;width:66px;text-align:center;top:945.69px;font-size:12.5px;line-height:14.37px;color:#eeeeee;font-weight:normal;">Cost</div>
<div class="a" style="left:1327.4px;top:942px;width:80.59999999999991px;height:21.5px;background:#d9d9cf;"></div>
<div class="t" style="left:1317.4px;width:100.59999999999991px;text-align:center;top:945.69px;font-size:12.5px;line-height:14.37px;color:#1a1a1a;font-weight:normal;">Sales Grid</div>
<div class="a" style="left:1413px;top:942px;width:99px;height:21.5px;background:#808080;"></div>
<div class="t" style="left:1403.0px;width:119px;text-align:center;top:945.69px;font-size:12.5px;line-height:14.37px;color:#eeeeee;font-weight:normal;">Expense Grid</div>
<div class="a" style="left:1517px;top:942px;width:83px;height:21.5px;background:#808080;"></div>
<div class="t" style="left:1507.0px;width:103px;text-align:center;top:945.69px;font-size:12.5px;line-height:14.37px;color:#eeeeee;font-weight:normal;">Lease Grid</div>
<div class="a" style="left:98.6px;top:943px;width:1px;height:20px;background:#9c9e9a;"></div>
<div class="a" style="left:173.5px;top:943px;width:1px;height:20px;background:#9c9e9a;"></div>
<div class="a" style="left:233.1px;top:943px;width:1px;height:20px;background:#9c9e9a;"></div>
<div class="a" style="left:355.2px;top:943px;width:1px;height:20px;background:#9c9e9a;"></div>
<div class="a" style="left:490.2px;top:943px;width:1px;height:20px;background:#9c9e9a;"></div>
<div class="a" style="left:586.6px;top:943px;width:1px;height:20px;background:#9c9e9a;"></div>
<div class="a" style="left:685.5px;top:943px;width:1px;height:20px;background:#9c9e9a;"></div>
<div class="a" style="left:812.5px;top:943px;width:1px;height:20px;background:#9c9e9a;"></div>
<div class="a" style="left:962px;top:943px;width:1px;height:20px;background:#9c9e9a;"></div>
<div class="a" style="left:1010px;top:943px;width:1px;height:20px;background:#9c9e9a;"></div>
<div class="a" style="left:1122.5px;top:943px;width:1px;height:20px;background:#9c9e9a;"></div>
<div class="a" style="left:1411px;top:943px;width:1px;height:20px;background:#9c9e9a;"></div>
<div class="a" style="left:1514.5px;top:943px;width:1px;height:20px;background:#9c9e9a;"></div>
<div class="a" style="left:1605.4px;top:943px;width:1px;height:20px;background:#9c9e9a;"></div>
<div class="a" style="left:1190.5px;top:939px;width:84px;height:25px;background:#ffffff;"></div>
<div class="t" style="left:1182.4px;width:100px;text-align:center;top:945.42px;font-size:12.8px;line-height:14.72px;color:#4b7a4e;font-weight:bold;">Land Grid</div>
<div class="a" style="left:1192px;top:963px;width:81px;height:0;border-top:1px dotted #6aa86a;"></div>
<div class="t" style="left:1606.5px;width:30px;text-align:center;top:945.24px;font-size:13px;line-height:14.95px;color:#ffffff;font-weight:normal;">...</div>
<svg class="a" style="left:1639px;top:945px" width="19" height="17" viewBox="0 0 19 17"><circle cx="9.5" cy="8.5" r="7.5" fill="none" stroke="#f0f0f0" stroke-width="1.4"/><path d="M9.5 4.5V12.5M5.5 8.5H13.5" stroke="#f0f0f0" stroke-width="1.4"/></svg>
<div class="a" style="left:1664.5px;top:940px;width:28px;height:28px;background:#2a2c2c;"></div>
<div class="a" style="left:1677px;top:948px;width:2px;height:2px;background:#eeeeee;"></div>
<div class="a" style="left:1677px;top:952.5px;width:2px;height:2px;background:#eeeeee;"></div>
<div class="a" style="left:1677px;top:957px;width:2px;height:2px;background:#eeeeee;"></div>
<div class="a" style="left:1693px;top:944px;width:206px;height:16px;border-radius:8px 0 0 8px;background:#3d4242;"></div>
<svg class="a" style="left:1696px;top:946px" width="200" height="12" viewBox="0 0 200 12"><path d="M7 1L1 6L7 11Z" fill="#b8b8b4"/><path d="M192 1L198 6L192 11Z" fill="#d8d8d4"/></svg>
<div class="a" style="left:1709px;top:947px;width:18px;height:10px;border-radius:5px;background:#a8aaa4;"></div>
</body></html>
